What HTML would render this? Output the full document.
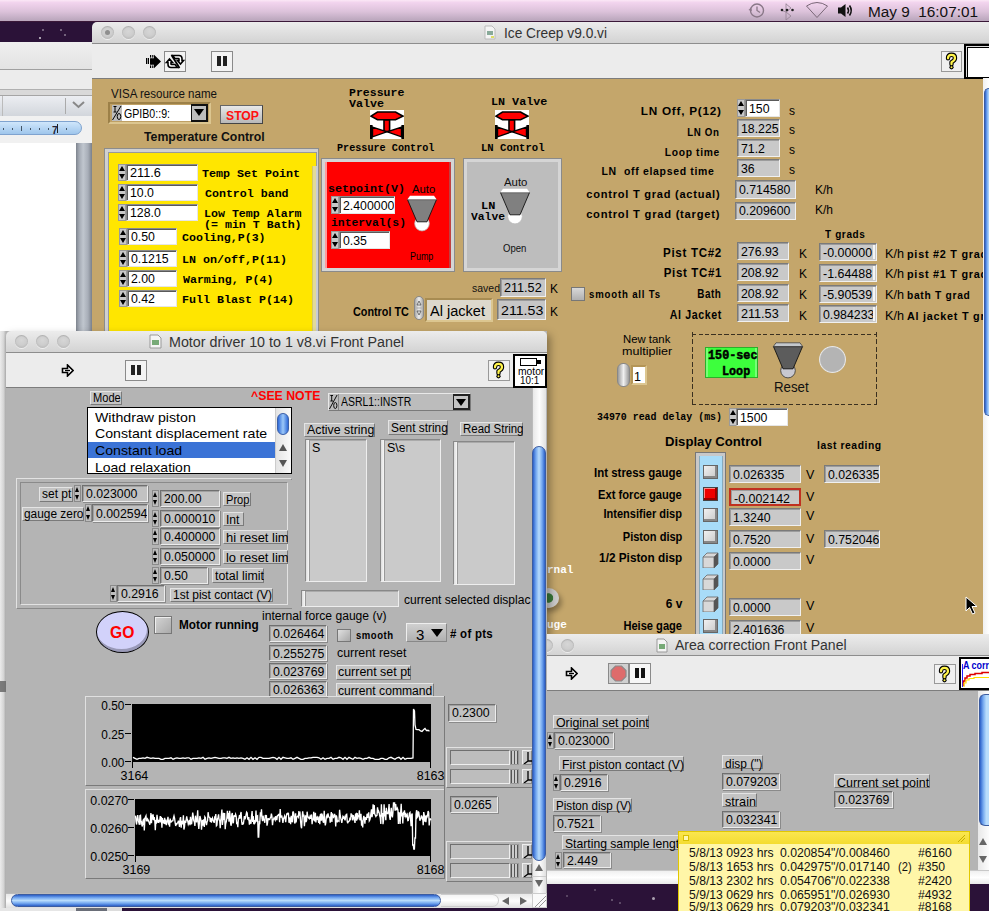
<!DOCTYPE html><html><head><meta charset="utf-8"><style>
*{box-sizing:border-box}
html,body{margin:0;padding:0}
body{width:989px;height:911px;position:relative;overflow:hidden;background:#2b1238;font-family:"Liberation Sans",sans-serif;font-size:12px;color:#000}
.a{position:absolute}
.t{position:absolute;white-space:nowrap;line-height:1}
.tl{position:absolute;border-radius:50%;background:radial-gradient(circle at 50% 40%,#d6d6d6 0%,#cdcdcd 50%,#b4b4b4 85%,#9c9c9c 100%);box-shadow:inset 0 1px 1px rgba(0,0,0,.15),0 1px 0 rgba(255,255,255,.6)}
.tld{position:absolute;width:5px;height:5px;border-radius:50%;background:#8e8e8e}
.tb{position:absolute;background:linear-gradient(#ececec,#d3d3d3);border-bottom:1px solid #8d8d8d}
.tbar{position:absolute;background:#ececec;border-bottom:1px solid #7d7d7d}
</style></head><body>
<div class="a" style="left:0px;top:0px;width:989px;height:22px;background:linear-gradient(#fbe8f6 0,#f2d4ee 12%,#dcc2da 55%,#bca8be 95%);border-bottom:1px solid #3a1838"></div>
<div class="t" style="left:868px;top:5.0px;font-size:14px;color:#111;transform:scaleX(1.0955);transform-origin:left center;">May 9&nbsp;&nbsp;16:07:01</div>
<svg class="a" style="left:740px;top:0px" width="130" height="22" viewBox="0 0 130 22"><circle cx="17" cy="10.5" r="6.5" fill="none" stroke="#8a7888" stroke-width="1.4"/><path d="M17 6.5V10.5L20 12.5" stroke="#8a7888" stroke-width="1.3" fill="none"/><path d="M8.5 10L11 7.5L12 11Z" fill="#8a7888"/><path d="M46 4L51 8L46 12V3.5M46 12L51 16L46 20V12M42 10.5L46 12" stroke="#9a8898" stroke-width="0.9" fill="none"/><circle cx="42" cy="10" r="1.3" fill="#222"/><circle cx="47" cy="10" r="1.3" fill="#222"/><circle cx="52.5" cy="10" r="1.3" fill="#222"/><path d="M66.5 6Q77 -1 87.5 6L77 17.5Z" fill="none" stroke="#7a6878" stroke-width="1"/><path d="M98 7.5H101L105.5 4V17L101 13.5H98Z" fill="#111"/><path d="M107.5 7.5Q109.5 10.5 107.5 13.5M109.5 5.5Q113 10.5 109.5 15.5" stroke="#111" stroke-width="1.6" fill="none"/></svg>
<div class="a" style="left:0px;top:42px;width:92px;height:869px;background:#fff"></div>
<div class="a" style="left:0px;top:42px;width:92px;height:28px;background:linear-gradient(#efefef,#e3e3e3);border-bottom:1px solid #a0a0a0"></div>
<div class="a" style="left:0px;top:70px;width:92px;height:20px;background:#ececec;border-bottom:1px solid #b0b0b0"></div>
<div class="a" style="left:0px;top:90px;width:92px;height:6px;background:#d9d9d9;border-bottom:1px solid #a5a5a5"></div>
<div class="a" style="left:0px;top:96px;width:92px;height:20px;background:linear-gradient(#eceef2,#d2d6dc)"></div>
<div class="a" style="left:65px;top:98px;width:1px;height:16px;background:#aaa"></div>
<div class="a" style="left:2px;top:96px;width:1px;height:20px;background:#bbb"></div>
<svg class="a" style="left:72px;top:101px" width="13" height="8" viewBox="0 0 13 8"><path d="M1 1L6.5 6L12 1" stroke="#888" stroke-width="2" fill="none"/></svg>
<div class="a" style="left:0px;top:116px;width:92px;height:27px;background:#f1f1f1"></div>
<div class="a" style="left:-12px;top:121px;width:94px;height:14px;border-radius:7px;background:linear-gradient(#cfe6fb,#9fc6ec);border:1px solid #7fa3cf"></div>
<div class="a" style="left:3px;top:128px;width:1px;height:2px;background:#456"></div>
<div class="a" style="left:12px;top:128px;width:1px;height:2px;background:#456"></div>
<div class="a" style="left:30px;top:128px;width:1px;height:2px;background:#456"></div>
<div class="a" style="left:39px;top:128px;width:1px;height:2px;background:#456"></div>
<div class="a" style="left:48px;top:128px;width:1px;height:2px;background:#456"></div>
<div class="a" style="left:66px;top:128px;width:1px;height:2px;background:#456"></div>
<div class="a" style="left:21px;top:126px;width:1px;height:5px;background:#456"></div>
<div class="a" style="left:57px;top:124px;width:1px;height:9px;background:#222"></div>
<div class="t" style="left:51.5px;top:124.6px;font-size:11px;color:#223;font-weight:bold;transform:scaleX(0.8980);transform-origin:left center;">7</div>
<div class="a" style="left:76px;top:143px;width:16px;height:190px;background:linear-gradient(90deg,#7e848e 0,#a4aab4 20%,#c0c6ce 45%,#a8aeb8 75%,#7a808a 100%)"></div>
<div class="a" style="left:0px;top:331px;width:6px;height:580px;background:linear-gradient(90deg,#ececec,#dcdcdc 60%,#b8b8b8)"></div>
<div class="a" style="left:0px;top:681px;width:6px;height:11px;background:#7c7c7c"></div>
<div class="a" style="left:92px;top:44px;width:897px;height:867px;background:#c4a66b"></div>
<div class="tb" style="left:92px;top:22px;width:897px;height:22px;border-radius:5px 0 0 0"></div>
<div class="tl" style="left:100.5px;top:26.200000000000003px;width:13px;height:13px;"></div>
<div class="tl" style="left:121.5px;top:26.200000000000003px;width:13px;height:13px;"></div>
<div class="tl" style="left:142.5px;top:26.200000000000003px;width:13px;height:13px;"></div>
<div class="tld" style="left:104.5px;top:30.2px;width:5px;height:5px;"></div>
<div class="t" style="left:504px;top:26.2px;font-size:14px;color:#333;transform:scaleX(0.9804);transform-origin:left center;">Ice Creep v9.0.vi</div>
<svg class="a" style="left:484px;top:25px" width="12" height="15" viewBox="0 0 12 15"><path d="M1 1H8L11 4V14H1Z" fill="#f4f4f4" stroke="#bbb"/><rect x="3" y="6" width="6" height="4" fill="#8a9"/><rect x="7" y="11" width="3" height="2" fill="#dd6"/></svg>
<div class="tbar" style="left:92px;top:44px;width:897px;height:35px;"></div>
<div class="a" style="left:964px;top:44px;width:25px;height:35px;background:#fff;border:2px solid #000;border-right:none;box-shadow:inset 1px 1px 0 #ddd,inset 2px 2px 0 #000"></div>
<!--ICECREEP-->
<svg class="a" style="left:145px;top:54px" width="17" height="15" viewBox="0 0 17 15"><rect x="1" y="4" width="1.2" height="6"/><rect x="2.8" y="4" width="1.2" height="6"/><rect x="5" y="1" width="1.2" height="2.6"/><rect x="7.2" y="1" width="1.2" height="2.6"/><rect x="5" y="11.4" width="1.2" height="2.6"/><rect x="7.2" y="11.4" width="1.2" height="2.6"/><path d="M5 4.2H9V0.8L16 7.5L9 14.2V10.8H5Z"/></svg>
<div class="a" style="left:164px;top:51px;width:22px;height:21px;background:#f3f3f3;border:1px solid #8a8a8a"></div>
<svg class="a" style="left:164px;top:51px" width="22" height="21" viewBox="0 0 22 21"><path d="M8.5 4.5H15Q18 4.5 18 7.5V9.5H19.5L16.5 13L13.5 9.5H15V8Q15 7.5 14.5 7.5H11Z" fill="#fff" stroke="#000" stroke-width="1.6"/><path d="M13.5 16.5H7Q4 16.5 4 13.5V11.5H2.5L5.5 8L8.5 11.5H7V13Q7 13.5 7.5 13.5H11Z" fill="#fff" stroke="#000" stroke-width="1.6"/><path d="M7.5 4L15.5 17" stroke="#000" stroke-width="1.8"/></svg>
<div class="a" style="left:211px;top:51px;width:22px;height:21px;background:#f3f3f3;border:1px solid #8a8a8a"></div>
<div class="a" style="left:217px;top:56px;width:4px;height:10px;background:#222"></div>
<div class="a" style="left:223px;top:56px;width:4px;height:10px;background:#222"></div>
<div class="a" style="left:941px;top:51px;width:21px;height:21px;background:#f0f0f0;border:1px solid #999"></div>
<svg class="a" style="left:941px;top:51px" width="21" height="20" viewBox="0 0 21 20"><path d="M7 7.3Q7 3.8 10.5 3.8Q14 3.8 14 7Q14 9.4 10.5 11.2V13.2" fill="none" stroke="#000" stroke-width="4.4" stroke-linecap="round" stroke-linejoin="round"/><circle cx="10.5" cy="16.3" r="2.1" fill="#000"/><path d="M7 7.3Q7 3.8 10.5 3.8Q14 3.8 14 7Q14 9.4 10.5 11.2V13.2" fill="none" stroke="#fff44a" stroke-width="2.2" stroke-linecap="round" stroke-linejoin="round"/><circle cx="10.5" cy="16.3" r="1" fill="#fff44a"/></svg>
<div class="t" style="left:111.4px;top:87.7px;font-size:12px;color:#111;transform:scaleX(0.9631);transform-origin:left center;">VISA resource name</div>
<div class="a" style="left:108px;top:102px;width:103px;height:22px;background:#bfa064;border:2px solid #9c8048;border-right-color:#dcc690;border-bottom-color:#dcc690"></div>
<svg class="a" style="left:112px;top:105px" width="10" height="16" viewBox="0 0 10 16" preserveAspectRatio="none"><rect width="10" height="16" fill="#bdbdbd"/><path d="M1.5 1.5H4.5M3 1.5V7M1.5 7H4.5" stroke="#000" stroke-width="1"/><path d="M0.5 15L9 1" stroke="#000" stroke-width="1"/><ellipse cx="7" cy="11.5" rx="1.8" ry="3" fill="none" stroke="#000" stroke-width="1"/></svg>
<div class="a" style="left:122px;top:105px;width:69px;height:16px;background:#fff"></div>
<div class="t" style="left:124.2px;top:106.9px;font-size:13px;;transform:scaleX(0.8160);transform-origin:left center;">GPIB0::9:</div>
<div class="a" style="left:191px;top:104px;width:17px;height:18px;background:#bdbdbd;border:2px solid #111;border-left-width:1px"></div>
<div class="a" style="left:194px;top:109px;width:0;height:0;border-left:5px solid transparent;border-right:5px solid transparent;border-top:7px solid #000"></div>
<div class="a" style="left:220px;top:105px;width:43px;height:19px;background:linear-gradient(#e8e8e8,#b8b8b8);border:1px solid #666;border-right-color:#444;border-bottom-color:#444"></div>
<div class="t" style="left:225.6px;top:108.9px;font-size:13px;font-weight:bold;color:#ff1010;transform:scaleX(0.9382);transform-origin:left center;">STOP</div>
<div class="t" style="left:144px;top:130.8px;font-size:12.5px;font-weight:bold;color:#111;transform:scaleX(0.9837);transform-origin:left center;">Temperature Control</div>
<div class="a" style="left:104px;top:148px;width:215px;height:190px;background:#d0d0d0;border:1px solid #8c8c8c"></div>
<div class="a" style="left:108px;top:152px;width:209px;height:186px;background:#ffe600;border:1px solid #999"></div>
<div class="a" style="left:312px;top:166px;width:6px;height:165px;background:#e2da98;border-left:1px solid #d0c870;border-right:2px solid #c8ccd8"></div>
<div class="a" style="left:118px;top:164px;width:8px;height:17px;background:#c8c8c8;border:1px solid #9a9a9a"><div class="a" style="left:0;top:1px;width:0;height:0;border-left:3px solid transparent;border-right:3px solid transparent;border-bottom:5px solid #000"></div><div class="a" style="left:0;bottom:1px;width:0;height:0;border-left:3px solid transparent;border-right:3px solid transparent;border-top:5px solid #000"></div></div>
<div class="a" style="left:126px;top:164px;width:72px;height:17px;background:#fff;border:1px solid #8a8a8a;border-right-color:#e6e6e6;border-bottom-color:#e6e6e6;box-shadow:inset 1px 1px 0 #5a5a5a;overflow:hidden;"><div class="t" style="left:2.5px;top:1.8px;font-size:12px;transform:scaleX(1.0569);transform-origin:left center;">211.6</div></div>
<div class="t" style="left:202.3px;top:167.7px;font-size:11.5px;font-family:'Liberation Mono',monospace;font-weight:bold;color:#000;transform:scaleX(1.0142);transform-origin:left center;">Temp Set Point</div>
<div class="a" style="left:118px;top:184px;width:8px;height:17px;background:#c8c8c8;border:1px solid #9a9a9a"><div class="a" style="left:0;top:1px;width:0;height:0;border-left:3px solid transparent;border-right:3px solid transparent;border-bottom:5px solid #000"></div><div class="a" style="left:0;bottom:1px;width:0;height:0;border-left:3px solid transparent;border-right:3px solid transparent;border-top:5px solid #000"></div></div>
<div class="a" style="left:126px;top:184px;width:72px;height:17px;background:#fff;border:1px solid #8a8a8a;border-right-color:#e6e6e6;border-bottom-color:#e6e6e6;box-shadow:inset 1px 1px 0 #5a5a5a;overflow:hidden;"><div class="t" style="left:2.5px;top:1.8px;font-size:12px;transform:scaleX(1.0253);transform-origin:left center;">10.0</div></div>
<div class="t" style="left:204.7px;top:187.7px;font-size:11.5px;font-family:'Liberation Mono',monospace;font-weight:bold;color:#000;transform:scaleX(1.0093);transform-origin:left center;">Control band</div>
<div class="a" style="left:118px;top:204px;width:8px;height:17px;background:#c8c8c8;border:1px solid #9a9a9a"><div class="a" style="left:0;top:1px;width:0;height:0;border-left:3px solid transparent;border-right:3px solid transparent;border-bottom:5px solid #000"></div><div class="a" style="left:0;bottom:1px;width:0;height:0;border-left:3px solid transparent;border-right:3px solid transparent;border-top:5px solid #000"></div></div>
<div class="a" style="left:126px;top:204px;width:72px;height:17px;background:#fff;border:1px solid #8a8a8a;border-right-color:#e6e6e6;border-bottom-color:#e6e6e6;box-shadow:inset 1px 1px 0 #5a5a5a;overflow:hidden;"><div class="t" style="left:2.5px;top:1.8px;font-size:12px;transform:scaleX(1.0256);transform-origin:left center;">128.0</div></div>
<div class="t" style="left:203.6px;top:207.7px;font-size:11.5px;font-family:'Liberation Mono',monospace;font-weight:bold;color:#000;transform:scaleX(1.0101);transform-origin:left center;">Low Temp Alarm</div>
<div class="a" style="left:119px;top:228px;width:8px;height:17px;background:#c8c8c8;border:1px solid #9a9a9a"><div class="a" style="left:0;top:1px;width:0;height:0;border-left:3px solid transparent;border-right:3px solid transparent;border-bottom:5px solid #000"></div><div class="a" style="left:0;bottom:1px;width:0;height:0;border-left:3px solid transparent;border-right:3px solid transparent;border-top:5px solid #000"></div></div>
<div class="a" style="left:127px;top:228px;width:50px;height:17px;background:#fff;border:1px solid #8a8a8a;border-right-color:#e6e6e6;border-bottom-color:#e6e6e6;box-shadow:inset 1px 1px 0 #5a5a5a;overflow:hidden;"><div class="t" style="left:2.5px;top:1.8px;font-size:12px;transform:scaleX(1.0253);transform-origin:left center;">0.50</div></div>
<div class="t" style="left:181.9px;top:231.7px;font-size:11.5px;font-family:'Liberation Mono',monospace;font-weight:bold;color:#000;transform:scaleX(1.0093);transform-origin:left center;">Cooling,P(3)</div>
<div class="a" style="left:119px;top:250px;width:8px;height:17px;background:#c8c8c8;border:1px solid #9a9a9a"><div class="a" style="left:0;top:1px;width:0;height:0;border-left:3px solid transparent;border-right:3px solid transparent;border-bottom:5px solid #000"></div><div class="a" style="left:0;bottom:1px;width:0;height:0;border-left:3px solid transparent;border-right:3px solid transparent;border-top:5px solid #000"></div></div>
<div class="a" style="left:127px;top:250px;width:50px;height:17px;background:#fff;border:1px solid #8a8a8a;border-right-color:#e6e6e6;border-bottom-color:#e6e6e6;box-shadow:inset 1px 1px 0 #5a5a5a;overflow:hidden;"><div class="t" style="left:2.5px;top:1.8px;font-size:12px;transform:scaleX(1.0258);transform-origin:left center;">0.1215</div></div>
<div class="t" style="left:181.9px;top:253.7px;font-size:11.5px;font-family:'Liberation Mono',monospace;font-weight:bold;color:#000;transform:scaleX(1.0142);transform-origin:left center;">LN on/off,P(11)</div>
<div class="a" style="left:119px;top:270px;width:8px;height:17px;background:#c8c8c8;border:1px solid #9a9a9a"><div class="a" style="left:0;top:1px;width:0;height:0;border-left:3px solid transparent;border-right:3px solid transparent;border-bottom:5px solid #000"></div><div class="a" style="left:0;bottom:1px;width:0;height:0;border-left:3px solid transparent;border-right:3px solid transparent;border-top:5px solid #000"></div></div>
<div class="a" style="left:127px;top:270px;width:50px;height:17px;background:#fff;border:1px solid #8a8a8a;border-right-color:#e6e6e6;border-bottom-color:#e6e6e6;box-shadow:inset 1px 1px 0 #5a5a5a;overflow:hidden;"><div class="t" style="left:2.5px;top:1.8px;font-size:12px;transform:scaleX(1.0253);transform-origin:left center;">2.00</div></div>
<div class="t" style="left:182.8px;top:273.7px;font-size:11.5px;font-family:'Liberation Mono',monospace;font-weight:bold;color:#000;transform:scaleX(1.0076);transform-origin:left center;">Warming, P(4)</div>
<div class="a" style="left:119px;top:290px;width:8px;height:17px;background:#c8c8c8;border:1px solid #9a9a9a"><div class="a" style="left:0;top:1px;width:0;height:0;border-left:3px solid transparent;border-right:3px solid transparent;border-bottom:5px solid #000"></div><div class="a" style="left:0;bottom:1px;width:0;height:0;border-left:3px solid transparent;border-right:3px solid transparent;border-top:5px solid #000"></div></div>
<div class="a" style="left:127px;top:290px;width:50px;height:17px;background:#fff;border:1px solid #8a8a8a;border-right-color:#e6e6e6;border-bottom-color:#e6e6e6;box-shadow:inset 1px 1px 0 #5a5a5a;overflow:hidden;"><div class="t" style="left:2.5px;top:1.8px;font-size:12px;transform:scaleX(1.0253);transform-origin:left center;">0.42</div></div>
<div class="t" style="left:181.9px;top:293.7px;font-size:11.5px;font-family:'Liberation Mono',monospace;font-weight:bold;color:#000;transform:scaleX(1.0143);transform-origin:left center;">Full Blast P(14)</div>
<div class="t" style="left:204.2px;top:219.2px;font-size:11.5px;font-family:'Liberation Mono',monospace;font-weight:bold;;transform:scaleX(1.0101);transform-origin:left center;">(= min T Bath)</div>
<div class="t" style="left:349.4px;top:87.6px;font-size:11px;font-family:'Liberation Mono',monospace;font-weight:bold;;transform:scaleX(1.0490);transform-origin:left center;">Pressure</div>
<div class="t" style="left:349.4px;top:98.6px;font-size:11px;font-family:'Liberation Mono',monospace;font-weight:bold;;transform:scaleX(1.0601);transform-origin:left center;">Valve</div>
<svg class="a" style="left:370px;top:110px" width="34" height="29" viewBox="0 0 34 29"><rect width="34" height="29" fill="#fff"/><path d="M1 6.2L7.5 2H25.5L33 6.2L25.5 9.8H7.5Z" fill="#f00" stroke="#000" stroke-width="1.6" stroke-linejoin="miter"/><rect x="14" y="10" width="5.6" height="11.5" fill="#f00" stroke="#000" stroke-width="1.6"/><rect x="0" y="15" width="2.6" height="14" fill="#000"/><rect x="31.4" y="15" width="2.6" height="14" fill="#000"/><path d="M2.5 17.2L16.8 21.8L2.5 26.8Z M31.5 17.2L17.2 21.8L31.5 26.8Z" fill="#f00" stroke="#000" stroke-width="1.4" stroke-linejoin="miter"/></svg>
<div class="t" style="left:336.6px;top:143.3px;font-size:11.3px;font-family:'Liberation Mono',monospace;font-weight:bold;;transform:scaleX(0.8980);transform-origin:left center;">Pressure Control</div>
<svg class="a" style="left:495px;top:110px" width="34" height="29" viewBox="0 0 34 29"><rect width="34" height="29" fill="#fff"/><path d="M1 6.2L7.5 2H25.5L33 6.2L25.5 9.8H7.5Z" fill="#f00" stroke="#000" stroke-width="1.6" stroke-linejoin="miter"/><rect x="14" y="10" width="5.6" height="11.5" fill="#f00" stroke="#000" stroke-width="1.6"/><rect x="0" y="15" width="2.6" height="14" fill="#000"/><rect x="31.4" y="15" width="2.6" height="14" fill="#000"/><path d="M2.5 17.2L16.8 21.8L2.5 26.8Z M31.5 17.2L17.2 21.8L31.5 26.8Z" fill="#f00" stroke="#000" stroke-width="1.4" stroke-linejoin="miter"/></svg>
<div class="t" style="left:491.4px;top:96.6px;font-size:11px;font-family:'Liberation Mono',monospace;font-weight:bold;;transform:scaleX(1.0660);transform-origin:left center;">LN Valve</div>
<div class="t" style="left:480.5px;top:143.3px;font-size:11.3px;font-family:'Liberation Mono',monospace;font-weight:bold;;transform:scaleX(0.9366);transform-origin:left center;">LN Control</div>
<div class="a" style="left:321px;top:158px;width:134px;height:114px;background:#d5d5d5;border:1px solid #8a8a8a"></div>
<div class="a" style="left:325px;top:162px;width:126px;height:106px;background:#ff0000;border-right:2px solid #c04040;border-left:2px solid #ff9999"></div>
<div class="t" style="left:327.8px;top:183.6px;font-size:11px;font-family:'Liberation Mono',monospace;font-weight:bold;color:#000;transform:scaleX(1.0589);transform-origin:left center;">setpoint(V)</div>
<div class="t" style="left:411.7px;top:183.6px;font-size:11px;color:#000;transform:scaleX(1.0291);transform-origin:left center;">Auto</div>
<div class="a" style="left:331px;top:196px;width:8px;height:18px;background:#c8c8c8;border:1px solid #9a9a9a"><div class="a" style="left:0;top:1px;width:0;height:0;border-left:3px solid transparent;border-right:3px solid transparent;border-bottom:5px solid #000"></div><div class="a" style="left:0;bottom:1px;width:0;height:0;border-left:3px solid transparent;border-right:3px solid transparent;border-top:5px solid #000"></div></div>
<div class="a" style="left:339px;top:196px;width:56px;height:18px;background:#fff;border:1px solid #8a8a8a;border-right-color:#e6e6e6;border-bottom-color:#e6e6e6;box-shadow:inset 1px 1px 0 #5a5a5a;overflow:hidden;"><div class="t" style="left:2.5px;top:2.8px;font-size:12px;transform:scaleX(1.0257);transform-origin:left center;">2.400000</div></div>
<div class="t" style="left:330.6px;top:217.6px;font-size:11px;font-family:'Liberation Mono',monospace;font-weight:bold;color:#000;transform:scaleX(1.0327);transform-origin:left center;">interval(s)</div>
<div class="a" style="left:331px;top:231px;width:8px;height:18px;background:#c8c8c8;border:1px solid #9a9a9a"><div class="a" style="left:0;top:1px;width:0;height:0;border-left:3px solid transparent;border-right:3px solid transparent;border-bottom:5px solid #000"></div><div class="a" style="left:0;bottom:1px;width:0;height:0;border-left:3px solid transparent;border-right:3px solid transparent;border-top:5px solid #000"></div></div>
<div class="a" style="left:339px;top:231px;width:51px;height:18px;background:#fff;border:1px solid #8a8a8a;border-right-color:#e6e6e6;border-bottom-color:#e6e6e6;box-shadow:inset 1px 1px 0 #5a5a5a;overflow:hidden;"><div class="t" style="left:2.5px;top:2.8px;font-size:12px;transform:scaleX(1.0253);transform-origin:left center;">0.35</div></div>
<div class="t" style="left:409.9px;top:250.6px;font-size:11px;color:#000;transform:scaleX(0.8104);transform-origin:left center;">Pump</div>
<svg class="a" style="left:406px;top:195px" width="32" height="37" viewBox="0 0 32 37"><circle cx="16" cy="28.6" r="7.3" fill="#fff" stroke="#bbb" stroke-width="0.8"/><path d="M1.5 4.6H30.5L21 26.8H11Z" fill="#808080" stroke="#111" stroke-width="0.9" stroke-linejoin="miter"/><path d="M1.3 4.6L4 0.8H28L30.7 4.6Z" fill="#fff" stroke="none" stroke-width="0.7"/></svg>
<div class="a" style="left:463px;top:158px;width:99px;height:114px;background:#d5d5d5;border:1px solid #8a8a8a"></div>
<div class="a" style="left:467px;top:162px;width:91px;height:106px;background:#bdbdbd"></div>
<div class="t" style="left:503.7px;top:176.6px;font-size:11px;color:#111;transform:scaleX(1.0335);transform-origin:left center;">Auto</div>
<svg class="a" style="left:498.5px;top:188px" width="32" height="37" viewBox="0 0 32 37"><circle cx="16" cy="28.6" r="7.3" fill="#fff" stroke="#bbb" stroke-width="0.8"/><path d="M1.5 4.6H30.5L21 26.8H11Z" fill="#808080" stroke="#111" stroke-width="0.9" stroke-linejoin="miter"/><path d="M1.3 4.6L4 0.8H28L30.7 4.6Z" fill="#fff" stroke="none" stroke-width="0.7"/></svg>
<div class="t" style="left:480.5px;top:200.6px;font-size:11px;font-family:'Liberation Mono',monospace;font-weight:bold;;transform:scaleX(1.0831);transform-origin:left center;">LN</div>
<div class="t" style="left:470.8px;top:211.6px;font-size:11px;font-family:'Liberation Mono',monospace;font-weight:bold;;transform:scaleX(1.0298);transform-origin:left center;">Valve</div>
<div class="t" style="left:502.9px;top:242.6px;font-size:11px;color:#111;transform:scaleX(0.8692);transform-origin:left center;">Open</div>
<div class="t" style="left:472.3px;top:283.2px;font-size:11.5px;color:#111;transform:scaleX(0.9124);transform-origin:left center;">saved</div>
<div class="a" style="left:500px;top:278px;width:46px;height:19px;background:#c6c6c6;border:1px solid #7a7a7a;border-right-color:#f0f0f0;border-bottom-color:#f0f0f0;box-shadow:inset 1px 1px 0 #9c9c9c;overflow:hidden;"><div class="t" style="left:2.5px;top:3.3px;font-size:12px;transform:scaleX(1.0513);transform-origin:left center;">211.52</div></div>
<div class="t" style="left:550px;top:282.7px;font-size:12px;;">K</div>
<div class="t" style="left:352.8px;top:305.7px;font-size:12px;font-weight:bold;;transform:scaleX(0.9000);transform-origin:left center;">Control TC</div>
<div class="a" style="left:414px;top:296px;width:10px;height:24px;border-radius:5px;background:linear-gradient(90deg,#aaa,#eee,#aaa);border:1px solid #888"></div>
<svg class="a" style="left:415px;top:299px" width="8" height="18" viewBox="0 0 8 18"><path d="M4 2L6 6H2Z M4 16L6 12H2Z" fill="none" stroke="#555" stroke-width="0.8"/><path d="M1.5 9H6.5" stroke="#888" stroke-width="0.6"/></svg>
<div class="a" style="left:425px;top:298px;width:68px;height:24px;background:#ddd8cc;border:2px solid #a88c52;border-right-color:#dcc690;border-bottom-color:#dcc690"></div>
<div class="t" style="left:430px;top:304.0px;font-size:14px;;transform:scaleX(1.0393);transform-origin:left center;">Al jacket</div>
<div class="a" style="left:497px;top:299px;width:49px;height:21px;background:#c6c6c6;border:1px solid #7a7a7a;border-right-color:#f0f0f0;border-bottom-color:#f0f0f0;box-shadow:inset 1px 1px 0 #9c9c9c;overflow:hidden;"><div class="t" style="left:2.5px;top:4.1px;font-size:13.5px;transform:scaleX(1.0511);transform-origin:left center;">211.53</div></div>
<div class="t" style="left:550px;top:305.7px;font-size:12px;;">K</div>
<div class="t" style="right:267.70000000000005px;top:105.6px;font-size:11px;font-weight:bold;letter-spacing:0.7px;;transform:scaleX(1.0697);transform-origin:right center;">LN Off, P(12)</div>
<div class="a" style="left:737px;top:99px;width:8px;height:18px;background:#c8c8c8;border:1px solid #9a9a9a"><div class="a" style="left:0;top:1px;width:0;height:0;border-left:3px solid transparent;border-right:3px solid transparent;border-bottom:5px solid #000"></div><div class="a" style="left:0;bottom:1px;width:0;height:0;border-left:3px solid transparent;border-right:3px solid transparent;border-top:5px solid #000"></div></div>
<div class="a" style="left:745px;top:99px;width:35px;height:18px;background:#fff;border:1px solid #8a8a8a;border-right-color:#e6e6e6;border-bottom-color:#e6e6e6;box-shadow:inset 1px 1px 0 #5a5a5a;overflow:hidden;"><div class="t" style="left:2.5px;top:2.8px;font-size:12px;transform:scaleX(1.0259);transform-origin:left center;">150</div></div>
<div class="t" style="left:789px;top:104.7px;font-size:12px;;">s</div>
<div class="t" style="right:269.4px;top:126.6px;font-size:11px;font-weight:bold;letter-spacing:0.7px;;transform:scaleX(0.8849);transform-origin:right center;">LN On</div>
<div class="a" style="left:737px;top:119px;width:43px;height:18px;background:#c9c9c9;border:1px solid #7a7a7a;border-right-color:#f0f0f0;border-bottom-color:#f0f0f0;box-shadow:inset 1px 1px 0 #9c9c9c;overflow:hidden;"><div class="t" style="left:2.5px;top:2.8px;font-size:12px;transform:scaleX(1.0258);transform-origin:left center;">18.225</div></div>
<div class="t" style="left:789px;top:123.7px;font-size:12px;;">s</div>
<div class="t" style="right:269.4px;top:147.3px;font-size:11px;font-weight:bold;letter-spacing:0.7px;;transform:scaleX(0.9344);transform-origin:right center;">Loop time</div>
<div class="a" style="left:737px;top:139px;width:43px;height:18px;background:#c9c9c9;border:1px solid #7a7a7a;border-right-color:#f0f0f0;border-bottom-color:#f0f0f0;box-shadow:inset 1px 1px 0 #9c9c9c;overflow:hidden;"><div class="t" style="left:2.5px;top:2.8px;font-size:12px;transform:scaleX(1.0253);transform-origin:left center;">71.2</div></div>
<div class="t" style="left:789px;top:143.7px;font-size:12px;;">s</div>
<div class="t" style="right:274.29999999999995px;top:165.6px;font-size:11px;font-weight:bold;letter-spacing:0.7px;;transform:scaleX(0.9533);transform-origin:right center;">LN&nbsp; off elapsed time</div>
<div class="a" style="left:737px;top:159px;width:43px;height:18px;background:#c9c9c9;border:1px solid #7a7a7a;border-right-color:#f0f0f0;border-bottom-color:#f0f0f0;box-shadow:inset 1px 1px 0 #9c9c9c;overflow:hidden;"><div class="t" style="left:2.5px;top:2.8px;font-size:12px;transform:scaleX(1.0255);transform-origin:left center;">36</div></div>
<div class="t" style="left:789px;top:163.7px;font-size:12px;;">s</div>
<div class="t" style="right:268.4px;top:188.6px;font-size:11px;font-weight:bold;letter-spacing:0.75px;;transform:scaleX(1.0047);transform-origin:right center;">control T grad (actual)</div>
<div class="a" style="left:735px;top:180px;width:61px;height:19px;background:#c9c9c9;border:1px solid #7a7a7a;border-right-color:#f0f0f0;border-bottom-color:#f0f0f0;box-shadow:inset 1px 1px 0 #9c9c9c;overflow:hidden;"><div class="t" style="left:2.5px;top:2.8px;font-size:12px;transform:scaleX(1.0257);transform-origin:left center;">0.714580</div></div>
<div class="t" style="left:815px;top:183.7px;font-size:12px;;">K/h</div>
<div class="t" style="right:268.4px;top:208.6px;font-size:11px;font-weight:bold;letter-spacing:0.75px;;transform:scaleX(1.0141);transform-origin:right center;">control T grad (target)</div>
<div class="a" style="left:735px;top:202px;width:61px;height:18px;background:#c9c9c9;border:1px solid #7a7a7a;border-right-color:#f0f0f0;border-bottom-color:#f0f0f0;box-shadow:inset 1px 1px 0 #9c9c9c;overflow:hidden;"><div class="t" style="left:2.5px;top:1.8px;font-size:12px;transform:scaleX(1.0257);transform-origin:left center;">0.209600</div></div>
<div class="t" style="left:815px;top:203.7px;font-size:12px;;">K/h</div>
<div class="t" style="left:824.5px;top:229.2px;font-size:11px;font-weight:bold;letter-spacing:0.7px;transform:scaleX(0.9072);transform-origin:left center;">T grads</div>
<div class="t" style="right:267.29999999999995px;top:246.7px;font-size:12px;font-weight:bold;letter-spacing:0.7px;;transform:scaleX(0.9672);transform-origin:right center;">Pist TC#2</div>
<div class="a" style="left:737px;top:242px;width:52px;height:18px;background:#c9c9c9;border:1px solid #7a7a7a;border-right-color:#f0f0f0;border-bottom-color:#f0f0f0;box-shadow:inset 1px 1px 0 #9c9c9c;overflow:hidden;"><div class="t" style="left:2.5px;top:2.8px;font-size:12px;transform:scaleX(1.0258);transform-origin:left center;">276.93</div></div>
<div class="t" style="left:799px;top:247.7px;font-size:12px;;">K</div>
<div class="a" style="left:819px;top:243px;width:58px;height:18px;background:#c9c9c9;border:1px solid #7a7a7a;border-right-color:#f0f0f0;border-bottom-color:#f0f0f0;box-shadow:inset 1px 1px 0 #9c9c9c;overflow:hidden;"><div class="t" style="left:2.5px;top:2.8px;font-size:12px;transform:scaleX(1.0364);transform-origin:left center;">-0.00000</div></div>
<div class="a" style="left:873px;top:245px;width:2px;height:14px;background:#f4f4f4"></div>
<div class="t" style="left:885px;top:248.3px;font-size:12.5px;;transform:scaleX(1.0125);transform-origin:left center;">K/h</div>
<div class="t" style="left:907.4px;top:249.2px;font-size:11.5px;font-weight:bold;letter-spacing:0.8px;transform:scaleX(0.9413);transform-origin:left center;">pist #2 T grad</div>
<div class="t" style="right:267.29999999999995px;top:266.7px;font-size:12px;font-weight:bold;letter-spacing:0.7px;;transform:scaleX(0.9557);transform-origin:right center;">Pist TC#1</div>
<div class="a" style="left:737px;top:263px;width:52px;height:18px;background:#c9c9c9;border:1px solid #7a7a7a;border-right-color:#f0f0f0;border-bottom-color:#f0f0f0;box-shadow:inset 1px 1px 0 #9c9c9c;overflow:hidden;"><div class="t" style="left:2.5px;top:2.8px;font-size:12px;transform:scaleX(1.0258);transform-origin:left center;">208.92</div></div>
<div class="t" style="left:799px;top:267.7px;font-size:12px;;">K</div>
<div class="a" style="left:819px;top:264px;width:58px;height:18px;background:#c9c9c9;border:1px solid #7a7a7a;border-right-color:#f0f0f0;border-bottom-color:#f0f0f0;box-shadow:inset 1px 1px 0 #9c9c9c;overflow:hidden;"><div class="t" style="left:2.5px;top:2.8px;font-size:12px;transform:scaleX(1.0364);transform-origin:left center;">-1.64488</div></div>
<div class="a" style="left:873px;top:266px;width:2px;height:14px;background:#f4f4f4"></div>
<div class="t" style="left:885px;top:268.3px;font-size:12.5px;;transform:scaleX(1.0125);transform-origin:left center;">K/h</div>
<div class="t" style="left:907.4px;top:269.2px;font-size:11.5px;font-weight:bold;letter-spacing:0.8px;transform:scaleX(0.9413);transform-origin:left center;">pist #1 T grad</div>
<div class="t" style="right:267.29999999999995px;top:287.7px;font-size:12px;font-weight:bold;letter-spacing:0.7px;;transform:scaleX(0.8246);transform-origin:right center;">Bath</div>
<div class="a" style="left:737px;top:284px;width:52px;height:18px;background:#c9c9c9;border:1px solid #7a7a7a;border-right-color:#f0f0f0;border-bottom-color:#f0f0f0;box-shadow:inset 1px 1px 0 #9c9c9c;overflow:hidden;"><div class="t" style="left:2.5px;top:2.8px;font-size:12px;transform:scaleX(1.0258);transform-origin:left center;">208.92</div></div>
<div class="t" style="left:799px;top:288.7px;font-size:12px;;">K</div>
<div class="a" style="left:819px;top:285px;width:58px;height:18px;background:#c9c9c9;border:1px solid #7a7a7a;border-right-color:#f0f0f0;border-bottom-color:#f0f0f0;box-shadow:inset 1px 1px 0 #9c9c9c;overflow:hidden;"><div class="t" style="left:2.5px;top:2.8px;font-size:12px;transform:scaleX(1.0364);transform-origin:left center;">-5.90539</div></div>
<div class="a" style="left:873px;top:287px;width:2px;height:14px;background:#f4f4f4"></div>
<div class="t" style="left:885px;top:289.3px;font-size:12.5px;;transform:scaleX(1.0125);transform-origin:left center;">K/h</div>
<div class="t" style="left:907.4px;top:290.2px;font-size:11.5px;font-weight:bold;letter-spacing:0.8px;transform:scaleX(0.8902);transform-origin:left center;">bath T grad</div>
<div class="t" style="right:267.29999999999995px;top:308.7px;font-size:12px;font-weight:bold;letter-spacing:0.7px;;transform:scaleX(0.8847);transform-origin:right center;">Al Jacket</div>
<div class="a" style="left:737px;top:304px;width:52px;height:18px;background:#c9c9c9;border:1px solid #7a7a7a;border-right-color:#f0f0f0;border-bottom-color:#f0f0f0;box-shadow:inset 1px 1px 0 #9c9c9c;overflow:hidden;"><div class="t" style="left:2.5px;top:2.8px;font-size:12px;transform:scaleX(1.0513);transform-origin:left center;">211.53</div></div>
<div class="t" style="left:799px;top:309.7px;font-size:12px;;">K</div>
<div class="a" style="left:819px;top:305px;width:58px;height:18px;background:#c9c9c9;border:1px solid #7a7a7a;border-right-color:#f0f0f0;border-bottom-color:#f0f0f0;box-shadow:inset 1px 1px 0 #9c9c9c;overflow:hidden;"><div class="t" style="left:2.5px;top:2.8px;font-size:12px;transform:scaleX(1.0257);transform-origin:left center;">0.984233</div></div>
<div class="a" style="left:873px;top:307px;width:2px;height:14px;background:#f4f4f4"></div>
<div class="t" style="left:885px;top:310.3px;font-size:12.5px;;transform:scaleX(1.0125);transform-origin:left center;">K/h</div>
<div class="t" style="left:907.4px;top:311.2px;font-size:11.5px;font-weight:bold;letter-spacing:0.8px;transform:scaleX(0.9393);transform-origin:left center;">Al jacket T grad</div>
<div class="a" style="left:571px;top:287px;width:14px;height:14px;background:linear-gradient(#d8d8d8,#b0b0b0);border:1px solid #777"></div>
<div class="t" style="left:589px;top:288.5px;font-size:10.5px;font-weight:bold;letter-spacing:0.9px;transform:scaleX(0.9159);transform-origin:left center;">smooth all Ts</div>
<div class="t" style="left:622.7px;top:334.0px;font-size:11.5px;;transform:scaleX(0.9867);transform-origin:left center;">New tank</div>
<div class="t" style="left:622px;top:346.0px;font-size:11.5px;;transform:scaleX(1.0909);transform-origin:left center;">multiplier</div>
<div class="a" style="left:617px;top:363px;width:13px;height:24px;border-radius:6px;background:linear-gradient(90deg,#9a9a9a,#f0f0f0 50%,#9a9a9a);border:1px solid #888"></div>
<div class="a" style="left:631px;top:365px;width:16px;height:20px;background:#fff;border:2px solid #b49556;border-right-color:#dcc690;border-bottom-color:#dcc690"></div>
<div class="t" style="left:634px;top:371.3px;font-size:12.5px;;">1</div>
<div class="a" style="left:692px;top:334px;width:185px;height:1px;background:repeating-linear-gradient(90deg,#3a3020 0 4px,transparent 4px 6.5px)"></div>
<div class="a" style="left:692px;top:404px;width:185px;height:1px;background:repeating-linear-gradient(90deg,#3a3020 0 4px,transparent 4px 6.5px)"></div>
<div class="a" style="left:692px;top:332px;width:1px;height:75px;background:repeating-linear-gradient(#3a3020 0 5px,transparent 5px 7.5px)"></div>
<div class="a" style="left:876px;top:332px;width:1px;height:75px;background:repeating-linear-gradient(#3a3020 0 5px,transparent 5px 7.5px)"></div>
<div class="a" style="left:705px;top:347px;width:53px;height:31px;background:#3dff3d;border:1px solid #2ab02a;box-shadow:inset 2px 0 0 #7f7,inset -2px 0 0 #7f7"></div>
<div class="t" style="left:707.8px;top:349.9px;font-size:12.5px;font-family:'Liberation Mono',monospace;font-weight:bold;-webkit-text-stroke:0.5px #000;transform:scaleX(0.9426);transform-origin:left center;">150-sec</div>
<div class="t" style="left:721.7px;top:365.9px;font-size:12.5px;font-family:'Liberation Mono',monospace;font-weight:bold;-webkit-text-stroke:0.5px #000;transform:scaleX(0.9395);transform-origin:left center;">Loop</div>
<svg class="a" style="left:771.5px;top:341.5px" width="32" height="37" viewBox="0 0 32 37"><circle cx="16" cy="28.6" r="7.3" fill="#c8c8d0" stroke="#333" stroke-width="0.8"/><path d="M1.5 4.6H30.5L21 26.8H11Z" fill="#5c5c5c" stroke="#111" stroke-width="0.9" stroke-linejoin="miter"/><path d="M1.3 4.6L4 0.8H28L30.7 4.6Z" fill="#c4c8cc" stroke="#333" stroke-width="0.7"/></svg>
<div class="t" style="left:773.5px;top:380.3px;font-size:14px;color:#111;transform:scaleX(0.9487);transform-origin:left center;">Reset</div>
<div class="a" style="left:819px;top:346px;width:27px;height:27px;border-radius:50%;background:radial-gradient(circle at 50% 50%,#b4b4b4 0%,#b4b4b4 62%,#e8e8e8 68%,#bbb 78%,#666 100%)"></div>
<div class="t" style="left:596.8px;top:411.5px;font-size:10.5px;font-family:'Liberation Mono',monospace;font-weight:bold;;transform:scaleX(0.9446);transform-origin:left center;">34970 read delay (ms)</div>
<div class="a" style="left:729px;top:408px;width:8px;height:18px;background:#c8c8c8;border:1px solid #9a9a9a"><div class="a" style="left:0;top:1px;width:0;height:0;border-left:3px solid transparent;border-right:3px solid transparent;border-bottom:5px solid #000"></div><div class="a" style="left:0;bottom:1px;width:0;height:0;border-left:3px solid transparent;border-right:3px solid transparent;border-top:5px solid #000"></div></div>
<div class="a" style="left:736px;top:408px;width:52px;height:18px;background:#fff;border:1px solid #8a8a8a;border-right-color:#e6e6e6;border-bottom-color:#e6e6e6;box-shadow:inset 1px 1px 0 #5a5a5a;overflow:hidden;"><div class="t" style="left:2.5px;top:2.8px;font-size:12px;transform:scaleX(1.0261);transform-origin:left center;">1500</div></div>
<div class="t" style="left:664.8px;top:434.6px;font-size:13px;font-weight:bold;;transform:scaleX(1.0096);transform-origin:left center;">Display Control</div>
<div class="t" style="left:816.9px;top:440.2px;font-size:11px;font-weight:bold;letter-spacing:0.6px;transform:scaleX(0.9383);transform-origin:left center;">last reading</div>
<div class="a" style="left:695px;top:452px;width:31px;height:190px;background:#c8c8c8;border:1px solid #777"></div>
<div class="a" style="left:699px;top:456px;width:24px;height:190px;background:#a8dcf8;border-left:1px solid #8ab;border-right:1px solid #8ab"></div>
<div class="a" style="left:703px;top:465px;width:15px;height:14px;background:linear-gradient(135deg,#f0f0f0,#c8c8c8);border:1px solid #666;box-shadow:inset -2px -2px 0 #888"></div>
<div class="t" style="right:307.1px;top:466.6px;font-size:12.5px;font-weight:bold;;transform:scaleX(0.9158);transform-origin:right center;">Int stress gauge</div>
<div class="a" style="left:729px;top:465px;width:72px;height:18px;background:#c9c9c9;border:1px solid #7a7a7a;border-right-color:#f0f0f0;border-bottom-color:#f0f0f0;box-shadow:inset 1px 1px 0 #9c9c9c;overflow:hidden;"><div class="t" style="left:2.5px;top:2.8px;font-size:12px;transform:scaleX(1.0257);transform-origin:left center;">0.026335</div></div>
<div class="t" style="left:806px;top:468.6px;font-size:12.5px;;">V</div>
<div class="a" style="left:824px;top:465px;width:56px;height:18px;background:#c9c9c9;border:1px solid #7a7a7a;border-right-color:#f0f0f0;border-bottom-color:#f0f0f0;box-shadow:inset 1px 1px 0 #9c9c9c;overflow:hidden;"><div class="t" style="left:2.5px;top:2.8px;font-size:12px;transform:scaleX(1.0257);transform-origin:left center;">0.026335</div></div>
<div class="a" style="left:703px;top:487px;width:15px;height:14px;background:#e00;border:1px solid #444;box-shadow:inset -2px -2px 0 #900,inset 1px 1px 0 #f88"></div>
<div class="t" style="right:307.1px;top:488.6px;font-size:12.5px;font-weight:bold;;transform:scaleX(0.8925);transform-origin:right center;">Ext force gauge</div>
<div class="a" style="left:729px;top:488px;width:72px;height:18px;background:#c9c9c9;border:1px solid #7a7a7a;border-right-color:#f0f0f0;border-bottom-color:#f0f0f0;box-shadow:inset 1px 1px 0 #9c9c9c;overflow:hidden;border:2px solid #c03020;"><div class="t" style="left:2.5px;top:2.8px;font-size:12px;transform:scaleX(1.0352);transform-origin:left center;">-0.002142</div></div>
<div class="t" style="left:806px;top:490.6px;font-size:12.5px;;">V</div>
<div class="a" style="left:703px;top:508px;width:15px;height:14px;background:linear-gradient(135deg,#f0f0f0,#c8c8c8);border:1px solid #666;box-shadow:inset -2px -2px 0 #888"></div>
<div class="t" style="right:307.1px;top:508.0px;font-size:12.5px;font-weight:bold;;transform:scaleX(0.8818);transform-origin:right center;">Intensifier disp</div>
<div class="a" style="left:729px;top:508px;width:72px;height:18px;background:#c9c9c9;border:1px solid #7a7a7a;border-right-color:#f0f0f0;border-bottom-color:#f0f0f0;box-shadow:inset 1px 1px 0 #9c9c9c;overflow:hidden;"><div class="t" style="left:2.5px;top:2.8px;font-size:12px;transform:scaleX(1.0258);transform-origin:left center;">1.3240</div></div>
<div class="t" style="left:806px;top:510.0px;font-size:12.5px;;">V</div>
<div class="a" style="left:703px;top:530px;width:15px;height:14px;background:linear-gradient(135deg,#f0f0f0,#c8c8c8);border:1px solid #666;box-shadow:inset -2px -2px 0 #888"></div>
<div class="t" style="right:307.1px;top:530.9px;font-size:12.5px;font-weight:bold;;transform:scaleX(0.8846);transform-origin:right center;">Piston disp</div>
<div class="a" style="left:729px;top:530px;width:72px;height:18px;background:#c9c9c9;border:1px solid #7a7a7a;border-right-color:#f0f0f0;border-bottom-color:#f0f0f0;box-shadow:inset 1px 1px 0 #9c9c9c;overflow:hidden;"><div class="t" style="left:2.5px;top:2.8px;font-size:12px;transform:scaleX(1.0258);transform-origin:left center;">0.7520</div></div>
<div class="t" style="left:806px;top:532.9px;font-size:12.5px;;">V</div>
<div class="a" style="left:824px;top:530px;width:56px;height:18px;background:#c9c9c9;border:1px solid #7a7a7a;border-right-color:#f0f0f0;border-bottom-color:#f0f0f0;box-shadow:inset 1px 1px 0 #9c9c9c;overflow:hidden;"><div class="t" style="left:2.5px;top:2.8px;font-size:12px;transform:scaleX(1.0257);transform-origin:left center;">0.752046</div></div>
<svg class="a" style="left:702px;top:552px" width="17" height="16" viewBox="0 0 17 16"><path d="M1 5L5 1H16V12L12 16H1Z" fill="#d8d8d8" stroke="#666" stroke-width="0.8"/><path d="M12 5H1M12 5V16M12 5L16 1" fill="none" stroke="#666" stroke-width="0.8"/><path d="M12 5L16 1V12L12 16Z" fill="#555"/></svg>
<div class="t" style="right:307.1px;top:552.2px;font-size:12.5px;font-weight:bold;;transform:scaleX(0.9420);transform-origin:right center;">1/2 Piston disp</div>
<div class="a" style="left:729px;top:552px;width:72px;height:18px;background:#c9c9c9;border:1px solid #7a7a7a;border-right-color:#f0f0f0;border-bottom-color:#f0f0f0;box-shadow:inset 1px 1px 0 #9c9c9c;overflow:hidden;"><div class="t" style="left:2.5px;top:2.8px;font-size:12px;transform:scaleX(1.0258);transform-origin:left center;">0.0000</div></div>
<div class="t" style="left:806px;top:554.2px;font-size:12.5px;;">V</div>
<svg class="a" style="left:702px;top:574px" width="17" height="16" viewBox="0 0 17 16"><path d="M1 5L5 1H16V12L12 16H1Z" fill="#d8d8d8" stroke="#666" stroke-width="0.8"/><path d="M12 5H1M12 5V16M12 5L16 1" fill="none" stroke="#666" stroke-width="0.8"/><path d="M12 5L16 1V12L12 16Z" fill="#555"/></svg>
<svg class="a" style="left:702px;top:596px" width="17" height="16" viewBox="0 0 17 16"><path d="M1 5L5 1H16V12L12 16H1Z" fill="#d8d8d8" stroke="#666" stroke-width="0.8"/><path d="M12 5H1M12 5V16M12 5L16 1" fill="none" stroke="#666" stroke-width="0.8"/><path d="M12 5L16 1V12L12 16Z" fill="#555"/></svg>
<div class="t" style="right:307.1px;top:598.3px;font-size:12.5px;font-weight:bold;;transform:scaleX(0.9545);transform-origin:right center;">6 v</div>
<div class="a" style="left:729px;top:598px;width:72px;height:18px;background:#c9c9c9;border:1px solid #7a7a7a;border-right-color:#f0f0f0;border-bottom-color:#f0f0f0;box-shadow:inset 1px 1px 0 #9c9c9c;overflow:hidden;"><div class="t" style="left:2.5px;top:2.8px;font-size:12px;transform:scaleX(1.0258);transform-origin:left center;">0.0000</div></div>
<div class="t" style="left:806px;top:600.3px;font-size:12.5px;;">V</div>
<div class="a" style="left:703px;top:619px;width:15px;height:14px;background:linear-gradient(135deg,#f0f0f0,#c8c8c8);border:1px solid #666;box-shadow:inset -2px -2px 0 #888"></div>
<div class="t" style="right:307.1px;top:620.3px;font-size:12.5px;font-weight:bold;;transform:scaleX(0.8877);transform-origin:right center;">Heise gage</div>
<div class="a" style="left:729px;top:620px;width:72px;height:18px;background:#c9c9c9;border:1px solid #7a7a7a;border-right-color:#f0f0f0;border-bottom-color:#f0f0f0;box-shadow:inset 1px 1px 0 #9c9c9c;overflow:hidden;"><div class="t" style="left:2.5px;top:2.8px;font-size:12px;transform:scaleX(1.0257);transform-origin:left center;">2.401636</div></div>
<div class="t" style="left:806px;top:622.3px;font-size:12.5px;;">V</div>
<div class="a" style="left:983px;top:78px;width:6px;height:833px;background:linear-gradient(90deg,#f0f0f0,#fff)"></div>
<div class="a" style="left:984px;top:88px;width:5px;height:328px;border-radius:5px 0 0 5px;background:linear-gradient(90deg,#2b5fc8,#74a8f0 50%,#b8dcfc);border:1px solid #3c5ca0;border-right:none"></div>
<div class="t" style="left:547px;top:564.6px;font-size:11px;font-family:'Liberation Mono',monospace;font-weight:bold;color:#fff;">rnal</div>
<div class="t" style="left:547px;top:619.6px;font-size:11px;font-family:'Liberation Mono',monospace;font-weight:bold;color:#fff;">uge</div>
<div class="a" style="left:538px;top:588px;width:21px;height:20px;border-radius:50%;background:radial-gradient(circle,#3a7a3a 0 30%,#ccc 35% 75%,#333 80%);box-shadow:3px 4px 5px rgba(0,0,0,.3)"></div>
<svg class="a" style="left:965px;top:596px" width="14" height="20" viewBox="0 0 14 20"><path d="M1 1V15L4.5 11.5L7.5 18L10 17L7 10.5H12Z" fill="#000" stroke="#fff" stroke-width="1"/></svg>
<div class="a" style="left:6px;top:331px;width:541px;height:577px;background:#b4b4b4;box-shadow:3px 4px 8px rgba(0,0,0,.35)"></div>
<div class="tb" style="left:6px;top:331px;width:541px;height:22px;border-radius:5px 5px 0 0"></div>
<div class="tl" style="left:14.5px;top:335.1px;width:13px;height:13px;"></div>
<div class="tl" style="left:35.5px;top:335.1px;width:13px;height:13px;"></div>
<div class="tl" style="left:56.5px;top:335.1px;width:13px;height:13px;"></div>
<svg class="a" style="left:149px;top:334px" width="13" height="15" viewBox="0 0 13 15"><path d="M1 1H9L12 4V14H1Z" fill="#f4f4f4" stroke="#999"/><rect x="3" y="6" width="7" height="5" fill="#7a7"/></svg>
<div class="t" style="left:168.5px;top:335.0px;font-size:14px;color:#333;transform:scaleX(1.0203);transform-origin:left center;">Motor driver 10 to 1 v8.vi Front Panel</div>
<div class="tbar" style="left:6px;top:353px;width:541px;height:35px;"></div>
<svg class="a" style="left:61px;top:364px" width="13" height="13" viewBox="0 0 13 13"><path d="M1.5 4.5H6.5V1L12 6.5L6.5 12V8.5H1.5Z" fill="#fff" stroke="#000" stroke-width="1.6"/><path d="M4 6.5H9" stroke="#000" stroke-width="1.4"/></svg>
<div class="a" style="left:125px;top:360px;width:22px;height:21px;background:#f3f3f3;border:1px solid #8a8a8a"></div>
<div class="a" style="left:131px;top:365px;width:4px;height:10px;background:#222"></div>
<div class="a" style="left:137px;top:365px;width:4px;height:10px;background:#222"></div>
<div class="a" style="left:488px;top:360px;width:22px;height:21px;background:#f0f0f0;border:1px solid #999"></div>
<svg class="a" style="left:488px;top:360px" width="21" height="20" viewBox="0 0 21 20"><path d="M7 7.3Q7 3.8 10.5 3.8Q14 3.8 14 7Q14 9.4 10.5 11.2V13.2" fill="none" stroke="#000" stroke-width="4.4" stroke-linecap="round" stroke-linejoin="round"/><circle cx="10.5" cy="16.3" r="2.1" fill="#000"/><path d="M7 7.3Q7 3.8 10.5 3.8Q14 3.8 14 7Q14 9.4 10.5 11.2V13.2" fill="none" stroke="#fff44a" stroke-width="2.2" stroke-linecap="round" stroke-linejoin="round"/><circle cx="10.5" cy="16.3" r="1" fill="#fff44a"/></svg>
<div class="a" style="left:513px;top:354px;width:34px;height:34px;background:#fff;border:2px solid #000"></div>
<div class="a" style="left:520px;top:358px;width:17px;height:8px;background:#fff;border:1.5px solid #000"></div>
<div class="a" style="left:537px;top:360px;width:4px;height:4px;background:#000"></div>
<div class="t" style="left:517.6px;top:365.9px;font-size:11.5px;;transform:scaleX(0.8944);transform-origin:left center;">motor</div>
<div class="t" style="left:520.3px;top:374.8px;font-size:11.5px;;transform:scaleX(0.8575);transform-origin:left center;">10:1</div>
<div class="a" style="left:90px;top:391px;width:32px;height:14px;background:#c4c4c4;border:1px solid #7a7a7a;border-top-color:#e4e4e4;border-left-color:#e4e4e4;clip-path:inset(-6px 0 -6px 0);"><div class="t" style="left:2px;top:0.4px;font-size:12.5px;transform:scaleX(0.8855);transform-origin:left center;">Mode</div></div>
<div class="t" style="left:251.1px;top:389.8px;font-size:12.5px;font-weight:bold;color:#f00;transform:scaleX(0.9842);transform-origin:left center;">^SEE NOTE</div>
<div class="a" style="left:87px;top:407px;width:205px;height:67px;background:#fff;border:1px solid #000"></div>
<div class="a" style="left:88px;top:442px;width:187px;height:16px;background:#3b73d6"></div>
<div class="t" style="left:94.5px;top:410.5px;font-size:13.5px;;transform:scaleX(1.0495);transform-origin:left center;">Withdraw piston</div>
<div class="t" style="left:94.5px;top:426.8px;font-size:13.5px;;transform:scaleX(1.0478);transform-origin:left center;">Constant displacement rate</div>
<div class="t" style="left:94.5px;top:444.3px;font-size:13.5px;;transform:scaleX(1.0467);transform-origin:left center;">Constant load</div>
<div class="t" style="left:94.5px;top:460.7px;font-size:13.5px;;transform:scaleX(1.0365);transform-origin:left center;">Load relaxation</div>
<div class="a" style="left:275px;top:408px;width:16px;height:65px;background:linear-gradient(90deg,#e4e4e4,#fafafa);border-left:1px solid #ccc"></div>
<div class="a" style="left:277px;top:413px;width:12px;height:22px;border-radius:6px;background:linear-gradient(90deg,#2f6ad8,#9cc8f8 50%,#2f6ad8);border:1px solid #3a5fa8"></div>
<div class="a" style="left:279px;top:444px;width:0;height:0;border-left:4px solid transparent;border-right:4px solid transparent;border-bottom:7px solid #555"></div>
<div class="a" style="left:279px;top:460px;width:0;height:0;border-left:4px solid transparent;border-right:4px solid transparent;border-top:7px solid #555"></div>
<div class="a" style="left:328px;top:393px;width:143px;height:18px;background:#c0c0c0;border:1px solid #7a7a7a;border-top-color:#e8e8e8;border-left-color:#e8e8e8"></div>
<svg class="a" style="left:329px;top:394px" width="9" height="16" viewBox="0 0 10 16" preserveAspectRatio="none"><rect width="10" height="16" fill="#bdbdbd"/><path d="M1.5 1.5H4.5M3 1.5V7M1.5 7H4.5" stroke="#000" stroke-width="1"/><path d="M0.5 15L9 1" stroke="#000" stroke-width="1"/><ellipse cx="7" cy="11.5" rx="1.8" ry="3" fill="none" stroke="#000" stroke-width="1"/></svg>
<div class="a" style="left:338px;top:394px;width:115px;height:16px;background:#bcbcbc;border-left:1px solid #888"></div>
<div class="t" style="left:341.3px;top:396.3px;font-size:12.5px;;transform:scaleX(0.8351);transform-origin:left center;">ASRL1::INSTR</div>
<div class="a" style="left:453px;top:394px;width:17px;height:16px;background:#c4c4c4;border:2px solid #222;border-left-width:1px"></div>
<div class="a" style="left:456px;top:399px;width:0;height:0;border-left:5px solid transparent;border-right:5px solid transparent;border-top:7px solid #000"></div>
<div class="a" style="left:304px;top:423px;width:71px;height:14px;background:#c4c4c4;border:1px solid #7a7a7a;border-top-color:#e4e4e4;border-left-color:#e4e4e4;clip-path:inset(-6px 0 -6px 0);"><div class="t" style="left:2px;top:0.0px;font-size:12.5px;transform:scaleX(0.9883);transform-origin:left center;">Active string</div></div>
<div class="a" style="left:388px;top:420px;width:60px;height:15px;background:#c4c4c4;border:1px solid #7a7a7a;border-top-color:#e4e4e4;border-left-color:#e4e4e4;clip-path:inset(-6px 0 -6px 0);"><div class="t" style="left:2px;top:1.2px;font-size:12.5px;transform:scaleX(0.9504);transform-origin:left center;">Sent string</div></div>
<div class="a" style="left:460px;top:422px;width:63px;height:14px;background:#c4c4c4;border:1px solid #7a7a7a;border-top-color:#e4e4e4;border-left-color:#e4e4e4;clip-path:inset(-6px 0 -6px 0);"><div class="t" style="left:2px;top:0.2px;font-size:12.5px;transform:scaleX(0.9164);transform-origin:left center;">Read String</div></div>
<div class="a" style="left:305px;top:439px;width:62px;height:143px;background:#cacaca;border:1px solid #888;border-right-color:#eee;border-bottom-color:#eee;box-shadow:inset 1px 1px 0 #aaa"></div>
<div class="a" style="left:306px;top:440px;width:4px;height:141px;background:linear-gradient(90deg,#ddd,#f8f8f8);border-right:1px solid #999"></div>
<div class="t" style="left:312px;top:442.3px;font-size:12.5px;;">S</div>
<div class="a" style="left:380px;top:439px;width:61px;height:143px;background:#cacaca;border:1px solid #888;border-right-color:#eee;border-bottom-color:#eee;box-shadow:inset 1px 1px 0 #aaa"></div>
<div class="a" style="left:381px;top:440px;width:4px;height:141px;background:linear-gradient(90deg,#ddd,#f8f8f8);border-right:1px solid #999"></div>
<div class="t" style="left:387px;top:442.3px;font-size:12.5px;;">S\s</div>
<div class="a" style="left:453px;top:441px;width:62px;height:144px;background:#cacaca;border:1px solid #888;border-right-color:#eee;border-bottom-color:#eee;box-shadow:inset 1px 1px 0 #aaa"></div>
<div class="a" style="left:454px;top:442px;width:4px;height:142px;background:linear-gradient(90deg,#ddd,#f8f8f8);border-right:1px solid #999"></div>
<div class="a" style="left:301px;top:590px;width:98px;height:17px;background:#cacaca;border:1px solid #888;border-right-color:#eee;border-bottom-color:#eee;box-shadow:inset 1px 1px 0 #aaa"></div>
<div class="a" style="left:302px;top:591px;width:4px;height:15px;background:linear-gradient(90deg,#ddd,#f8f8f8);border-right:1px solid #999"></div>
<div class="t" style="left:404.2px;top:594.3px;font-size:12.5px;;transform:scaleX(0.9625);transform-origin:left center;">current selected displac</div>
<div class="a" style="left:16px;top:478px;width:276px;height:131px;border:1px solid #8a8a8a;border-top-color:#e2e2e2;border-left-color:#e2e2e2"></div>
<div class="a" style="left:20px;top:482px;width:268px;height:123px;border:1px solid #e2e2e2;border-top-color:#8a8a8a;border-left-color:#8a8a8a"></div>
<div class="a" style="left:39px;top:487px;width:34px;height:15px;background:#c4c4c4;border:1px solid #7a7a7a;border-top-color:#e4e4e4;border-left-color:#e4e4e4;clip-path:inset(-6px 0 -6px 0);"><div class="t" style="left:2px;top:0.4px;font-size:12.5px;transform:scaleX(0.9582);transform-origin:left center;">set pt</div></div>
<div class="a" style="left:74px;top:485px;width:7px;height:17px;background:#bdbdbd;border:1px solid #8a8a8a"><div class="a" style="left:0;top:1px;width:0;height:0;border-left:2.5px solid transparent;border-right:2.5px solid transparent;border-bottom:5px solid #000"></div><div class="a" style="left:0;bottom:1px;width:0;height:0;border-left:2.5px solid transparent;border-right:2.5px solid transparent;border-top:5px solid #000"></div></div>
<div class="a" style="left:82px;top:485px;width:66px;height:17px;background:#c2c2c2;border:1px solid #6f6f6f;border-right-color:#ececec;border-bottom-color:#ececec;box-shadow:inset 1px 1px 0 #a0a0a0,1px 1px 0 #8a8a8a;overflow:hidden;"><div class="t" style="left:2.5px;top:1.8px;font-size:12px;transform:scaleX(1.0257);transform-origin:left center;">0.023000</div></div>
<div class="a" style="left:22px;top:507px;width:62px;height:14px;background:#c4c4c4;border:1px solid #7a7a7a;border-top-color:#e4e4e4;border-left-color:#e4e4e4;clip-path:inset(-6px 0 -6px 0);"><div class="t" style="left:1px;top:-0.1px;font-size:12.5px;transform:scaleX(0.9510);transform-origin:left center;">gauge zero</div></div>
<div class="a" style="left:85px;top:504px;width:7px;height:18px;background:#bdbdbd;border:1px solid #8a8a8a"><div class="a" style="left:0;top:1px;width:0;height:0;border-left:2.5px solid transparent;border-right:2.5px solid transparent;border-bottom:5px solid #000"></div><div class="a" style="left:0;bottom:1px;width:0;height:0;border-left:2.5px solid transparent;border-right:2.5px solid transparent;border-top:5px solid #000"></div></div>
<div class="a" style="left:92px;top:504px;width:56px;height:18px;background:#c2c2c2;border:1px solid #6f6f6f;border-right-color:#ececec;border-bottom-color:#ececec;box-shadow:inset 1px 1px 0 #a0a0a0,1px 1px 0 #8a8a8a;overflow:hidden;"><div class="t" style="left:2.5px;top:2.8px;font-size:12px;transform:scaleX(1.0257);transform-origin:left center;">0.002594</div></div>
<div class="a" style="left:152px;top:490px;width:7px;height:17px;background:#bdbdbd;border:1px solid #8a8a8a"><div class="a" style="left:0;top:1px;width:0;height:0;border-left:2.5px solid transparent;border-right:2.5px solid transparent;border-bottom:5px solid #000"></div><div class="a" style="left:0;bottom:1px;width:0;height:0;border-left:2.5px solid transparent;border-right:2.5px solid transparent;border-top:5px solid #000"></div></div>
<div class="a" style="left:160px;top:490px;width:60px;height:17px;background:#c2c2c2;border:1px solid #6f6f6f;border-right-color:#ececec;border-bottom-color:#ececec;box-shadow:inset 1px 1px 0 #a0a0a0,1px 1px 0 #8a8a8a;overflow:hidden;"><div class="t" style="left:2.5px;top:1.8px;font-size:12px;transform:scaleX(1.0258);transform-origin:left center;">200.00</div></div>
<div class="a" style="left:223px;top:492px;width:28px;height:14px;background:#c4c4c4;border:1px solid #7a7a7a;border-top-color:#e4e4e4;border-left-color:#e4e4e4;clip-path:inset(-6px 0 -6px 0);"><div class="t" style="left:2px;top:1.4px;font-size:12.5px;transform:scaleX(0.8862);transform-origin:left center;">Prop</div></div>
<div class="a" style="left:152px;top:510px;width:7px;height:17px;background:#bdbdbd;border:1px solid #8a8a8a"><div class="a" style="left:0;top:1px;width:0;height:0;border-left:2.5px solid transparent;border-right:2.5px solid transparent;border-bottom:5px solid #000"></div><div class="a" style="left:0;bottom:1px;width:0;height:0;border-left:2.5px solid transparent;border-right:2.5px solid transparent;border-top:5px solid #000"></div></div>
<div class="a" style="left:160px;top:510px;width:60px;height:17px;background:#c2c2c2;border:1px solid #6f6f6f;border-right-color:#ececec;border-bottom-color:#ececec;box-shadow:inset 1px 1px 0 #a0a0a0,1px 1px 0 #8a8a8a;overflow:hidden;"><div class="t" style="left:2.5px;top:1.8px;font-size:12px;transform:scaleX(1.0257);transform-origin:left center;">0.000010</div></div>
<div class="a" style="left:223px;top:512px;width:21px;height:14px;background:#c4c4c4;border:1px solid #7a7a7a;border-top-color:#e4e4e4;border-left-color:#e4e4e4;clip-path:inset(-6px 0 -6px 0);"><div class="t" style="left:2px;top:1.4px;font-size:12.5px;transform:scaleX(0.9708);transform-origin:left center;">Int</div></div>
<div class="a" style="left:152px;top:528px;width:7px;height:17px;background:#bdbdbd;border:1px solid #8a8a8a"><div class="a" style="left:0;top:1px;width:0;height:0;border-left:2.5px solid transparent;border-right:2.5px solid transparent;border-bottom:5px solid #000"></div><div class="a" style="left:0;bottom:1px;width:0;height:0;border-left:2.5px solid transparent;border-right:2.5px solid transparent;border-top:5px solid #000"></div></div>
<div class="a" style="left:160px;top:528px;width:60px;height:17px;background:#c2c2c2;border:1px solid #6f6f6f;border-right-color:#ececec;border-bottom-color:#ececec;box-shadow:inset 1px 1px 0 #a0a0a0,1px 1px 0 #8a8a8a;overflow:hidden;"><div class="t" style="left:2.5px;top:1.8px;font-size:12px;transform:scaleX(1.0257);transform-origin:left center;">0.400000</div></div>
<div class="a" style="left:223px;top:530px;width:65px;height:14px;background:#c4c4c4;border:1px solid #7a7a7a;border-top-color:#e4e4e4;border-left-color:#e4e4e4;clip-path:inset(-6px 0 -6px 0);"><div class="t" style="left:2px;top:1.4px;font-size:12.5px;transform:scaleX(1.0347);transform-origin:left center;">hi reset limit</div></div>
<div class="a" style="left:152px;top:548px;width:7px;height:17px;background:#bdbdbd;border:1px solid #8a8a8a"><div class="a" style="left:0;top:1px;width:0;height:0;border-left:2.5px solid transparent;border-right:2.5px solid transparent;border-bottom:5px solid #000"></div><div class="a" style="left:0;bottom:1px;width:0;height:0;border-left:2.5px solid transparent;border-right:2.5px solid transparent;border-top:5px solid #000"></div></div>
<div class="a" style="left:160px;top:548px;width:60px;height:17px;background:#c2c2c2;border:1px solid #6f6f6f;border-right-color:#ececec;border-bottom-color:#ececec;box-shadow:inset 1px 1px 0 #a0a0a0,1px 1px 0 #8a8a8a;overflow:hidden;"><div class="t" style="left:2.5px;top:1.8px;font-size:12px;transform:scaleX(1.0257);transform-origin:left center;">0.050000</div></div>
<div class="a" style="left:223px;top:550px;width:65px;height:14px;background:#c4c4c4;border:1px solid #7a7a7a;border-top-color:#e4e4e4;border-left-color:#e4e4e4;clip-path:inset(-6px 0 -6px 0);"><div class="t" style="left:2px;top:1.4px;font-size:12.5px;transform:scaleX(1.0347);transform-origin:left center;">lo reset limit</div></div>
<div class="a" style="left:289px;top:480px;width:3px;height:128px;background:#b4b4b4"></div>
<div class="a" style="left:152px;top:567px;width:7px;height:17px;background:#bdbdbd;border:1px solid #8a8a8a"><div class="a" style="left:0;top:1px;width:0;height:0;border-left:2.5px solid transparent;border-right:2.5px solid transparent;border-bottom:5px solid #000"></div><div class="a" style="left:0;bottom:1px;width:0;height:0;border-left:2.5px solid transparent;border-right:2.5px solid transparent;border-top:5px solid #000"></div></div>
<div class="a" style="left:160px;top:567px;width:48px;height:17px;background:#c2c2c2;border:1px solid #6f6f6f;border-right-color:#ececec;border-bottom-color:#ececec;box-shadow:inset 1px 1px 0 #a0a0a0,1px 1px 0 #8a8a8a;overflow:hidden;"><div class="t" style="left:2.5px;top:1.8px;font-size:12px;transform:scaleX(1.0253);transform-origin:left center;">0.50</div></div>
<div class="a" style="left:212px;top:568px;width:52px;height:15px;background:#c4c4c4;border:1px solid #7a7a7a;border-top-color:#e4e4e4;border-left-color:#e4e4e4;clip-path:inset(-6px 0 -6px 0);"><div class="t" style="left:2px;top:1.4px;font-size:12.5px;transform:scaleX(0.9933);transform-origin:left center;">total limit</div></div>
<div class="a" style="left:110px;top:585px;width:7px;height:17px;background:#bdbdbd;border:1px solid #8a8a8a"><div class="a" style="left:0;top:1px;width:0;height:0;border-left:2.5px solid transparent;border-right:2.5px solid transparent;border-bottom:5px solid #000"></div><div class="a" style="left:0;bottom:1px;width:0;height:0;border-left:2.5px solid transparent;border-right:2.5px solid transparent;border-top:5px solid #000"></div></div>
<div class="a" style="left:117px;top:585px;width:48px;height:17px;background:#c2c2c2;border:1px solid #6f6f6f;border-right-color:#ececec;border-bottom-color:#ececec;box-shadow:inset 1px 1px 0 #a0a0a0,1px 1px 0 #8a8a8a;overflow:hidden;"><div class="t" style="left:2.5px;top:1.8px;font-size:12px;transform:scaleX(1.0258);transform-origin:left center;">0.2916</div></div>
<div class="a" style="left:170px;top:588px;width:103px;height:14px;background:#c4c4c4;border:1px solid #7a7a7a;border-top-color:#e4e4e4;border-left-color:#e4e4e4;clip-path:inset(-6px 0 -6px 0);"><div class="t" style="left:2px;top:0.4px;font-size:12.5px;transform:scaleX(0.9573);transform-origin:left center;">1st pist contact (V)</div></div>
<div class="a" style="left:96px;top:611px;width:53px;height:42px;border-radius:50%;background:#d2d2fa;border:1.5px solid #000;box-shadow:inset -1px -3px 0 #9a9ab8"></div>
<div class="t" style="left:110.3px;top:624.8px;font-size:16px;font-weight:bold;color:#f00;transform:scaleX(0.9763);transform-origin:left center;">GO</div>
<div class="a" style="left:154px;top:616px;width:18px;height:18px;background:linear-gradient(135deg,#d4d4d4,#aaaaaa);border:1px solid #777;box-shadow:inset 1px 1px 0 #eee"></div>
<div class="t" style="left:178.7px;top:619.2px;font-size:12.5px;font-weight:bold;;transform:scaleX(0.9409);transform-origin:left center;">Motor running</div>
<div class="t" style="left:262.1px;top:610.0px;font-size:12.5px;;transform:scaleX(0.9693);transform-origin:left center;">internal force gauge (v)</div>
<div class="a" style="left:269px;top:625px;width:58px;height:17px;background:#c2c2c2;border:1px solid #6f6f6f;border-right-color:#ececec;border-bottom-color:#ececec;box-shadow:inset 1px 1px 0 #a0a0a0,1px 1px 0 #8a8a8a;overflow:hidden;"><div class="t" style="left:2.5px;top:1.8px;font-size:12px;transform:scaleX(1.0257);transform-origin:left center;">0.026464</div></div>
<div class="a" style="left:269px;top:645px;width:58px;height:16px;background:#c2c2c2;border:1px solid #6f6f6f;border-right-color:#ececec;border-bottom-color:#ececec;box-shadow:inset 1px 1px 0 #a0a0a0,1px 1px 0 #8a8a8a;overflow:hidden;"><div class="t" style="left:2.5px;top:1.8px;font-size:12px;transform:scaleX(1.0257);transform-origin:left center;">0.255275</div></div>
<div class="a" style="left:269px;top:663px;width:58px;height:16px;background:#c2c2c2;border:1px solid #6f6f6f;border-right-color:#ececec;border-bottom-color:#ececec;box-shadow:inset 1px 1px 0 #a0a0a0,1px 1px 0 #8a8a8a;overflow:hidden;"><div class="t" style="left:2.5px;top:1.8px;font-size:12px;transform:scaleX(1.0257);transform-origin:left center;">0.023769</div></div>
<div class="a" style="left:269px;top:681px;width:58px;height:16px;background:#c2c2c2;border:1px solid #6f6f6f;border-right-color:#ececec;border-bottom-color:#ececec;box-shadow:inset 1px 1px 0 #a0a0a0,1px 1px 0 #8a8a8a;overflow:hidden;"><div class="t" style="left:2.5px;top:1.8px;font-size:12px;transform:scaleX(1.0257);transform-origin:left center;">0.026363</div></div>
<div class="a" style="left:337px;top:629px;width:14px;height:13px;background:linear-gradient(135deg,#e0e0e0,#a8a8a8);border:1px solid #777"></div>
<div class="t" style="left:355.5px;top:630.4px;font-size:10.5px;font-weight:bold;letter-spacing:0.6px;transform:scaleX(0.9081);transform-origin:left center;">smooth</div>
<div class="a" style="left:406px;top:623px;width:41px;height:19px;background:linear-gradient(#d0d0d0,#b0b0b0);border:1px solid #888;border-top-color:#eee;border-left-color:#eee"></div>
<div class="t" style="left:416px;top:627.2px;font-size:15px;;">3</div>
<div class="a" style="left:431px;top:629px;width:0;height:0;border-left:6.5px solid transparent;border-right:6.5px solid transparent;border-top:8px solid #000"></div>
<div class="t" style="left:450.4px;top:628.3px;font-size:12px;font-weight:bold;letter-spacing:0.3px;transform:scaleX(0.9539);transform-origin:left center;"># of pts</div>
<div class="t" style="left:337.1px;top:646.8px;font-size:12.5px;;transform:scaleX(0.9890);transform-origin:left center;">current reset</div>
<div class="a" style="left:336px;top:665px;width:75px;height:15px;background:#c4c4c4;border:1px solid #7a7a7a;border-top-color:#e4e4e4;border-left-color:#e4e4e4;clip-path:inset(-6px 0 -6px 0);"><div class="t" style="left:1px;top:0.4px;font-size:12.5px;transform:scaleX(0.9938);transform-origin:left center;">current set pt</div></div>
<div class="a" style="left:336px;top:683px;width:98px;height:14px;background:#c4c4c4;border:1px solid #7a7a7a;border-top-color:#e4e4e4;border-left-color:#e4e4e4;clip-path:inset(-6px 0 -6px 0);"><div class="t" style="left:1px;top:0.6px;font-size:12.5px;transform:scaleX(0.9695);transform-origin:left center;">current command</div></div>
<div class="a" style="left:85px;top:696px;width:360px;height:90px;border:1px solid #e0e0e0;border-right-color:#7a7a7a;border-bottom-color:#7a7a7a"></div>
<div class="a" style="left:85px;top:789px;width:360px;height:90px;border:1px solid #e0e0e0;border-right-color:#7a7a7a;border-bottom-color:#7a7a7a"></div>
<div class="a" style="left:444px;top:696px;width:1px;height:183px;background:#7a7a7a"></div>
<div class="a" style="left:132px;top:704px;width:299px;height:58px;background:#000"></div>
<svg class="a" style="left:0;top:0" width="989" height="911"><polyline fill="none" stroke="#fff" stroke-width="1.3" points="133.0,757.3 135.0,758.3 137.0,759.3 139.0,758.3 141.0,758.3 143.0,757.8 145.0,758.3 147.0,757.3 149.0,757.8 151.0,758.3 153.0,757.8 155.0,758.3 157.0,758.3 159.0,758.3 161.0,759.3 163.0,759.3 165.0,758.3 167.0,758.3 169.0,758.3 171.0,757.8 173.0,759.3 175.0,758.3 177.0,757.8 179.0,758.3 181.0,758.3 183.0,757.8 185.0,758.3 187.0,757.8 189.0,757.8 191.0,759.3 193.0,758.3 195.0,758.3 197.0,758.3 199.0,757.8 201.0,758.3 203.0,757.3 205.0,759.3 207.0,758.3 209.0,757.8 211.0,758.3 213.0,757.8 215.0,757.3 217.0,757.8 219.0,758.3 221.0,758.3 223.0,757.8 225.0,757.8 227.0,758.3 229.0,757.3 231.0,758.3 233.0,757.8 235.0,758.3 237.0,757.8 239.0,758.3 241.0,757.8 243.0,758.3 245.0,759.3 247.0,757.8 249.0,759.3 251.0,757.3 253.0,759.3 255.0,757.8 257.0,759.3 259.0,757.3 261.0,757.3 263.0,758.3 265.0,758.3 267.0,758.3 269.0,758.3 271.0,757.8 273.0,757.3 275.0,757.8 277.0,759.3 279.0,757.3 281.0,759.3 283.0,757.3 285.0,757.8 287.0,758.3 289.0,758.3 291.0,757.8 293.0,759.3 295.0,758.3 297.0,757.3 299.0,758.3 301.0,759.3 303.0,759.3 305.0,758.3 307.0,758.3 309.0,757.8 311.0,757.8 313.0,757.3 315.0,757.3 317.0,757.3 319.0,757.8 321.0,759.3 323.0,757.8 325.0,759.3 327.0,758.3 329.0,758.3 331.0,757.3 333.0,759.3 335.0,758.3 337.0,758.3 339.0,757.3 341.0,757.8 343.0,759.3 345.0,757.3 347.0,759.3 349.0,757.3 351.0,758.3 353.0,759.3 355.0,757.3 357.0,758.3 359.0,757.8 361.0,758.3 363.0,759.3 365.0,758.3 367.0,758.3 369.0,757.3 371.0,758.3 373.0,758.3 375.0,759.3 377.0,759.3 379.0,759.3 381.0,758.3 383.0,758.3 385.0,759.3 387.0,759.3 389.0,757.8 391.0,757.3 393.0,758.3 395.0,759.3 397.0,757.8 399.0,757.3 401.0,759.3 403.0,757.3 405.0,759.3 407.0,758.3 409.0,758.3 411.0,758.3 413.0,758.0 413.5,709.0 414.5,711.0 415.0,725.0 416.0,729.4 417.5,729.7 419.0,729.7 420.5,730.9 422.0,731.4 423.5,729.8 425.0,728.5 426.5,730.6 428.0,730.3 429.5,731.3"/></svg>
<div class="a" style="left:125px;top:704px;width:6px;height:1px;background:#000"></div>
<div class="t" style="right:864.7px;top:700.3px;font-size:12.5px;;transform:scaleX(0.9448);transform-origin:right center;">0.50</div>
<div class="a" style="left:125px;top:733px;width:6px;height:1px;background:#000"></div>
<div class="t" style="right:864.7px;top:728.8px;font-size:12.5px;;transform:scaleX(0.9448);transform-origin:right center;">0.25</div>
<div class="a" style="left:125px;top:761px;width:6px;height:1px;background:#000"></div>
<div class="t" style="right:864.7px;top:757.3px;font-size:12.5px;;transform:scaleX(0.9448);transform-origin:right center;">0.00</div>
<div class="a" style="left:132px;top:762px;width:1px;height:6px;background:#000"></div>
<div class="a" style="left:430px;top:762px;width:1px;height:6px;background:#000"></div>
<div class="t" style="left:120.5px;top:769.8px;font-size:12.5px;;">3164</div>
<div class="t" style="right:544.5px;top:769.8px;font-size:12.5px;;">8163</div>
<div class="a" style="left:135px;top:799px;width:296px;height:57px;background:#000"></div>
<svg class="a" style="left:0;top:0" width="989" height="911"><polyline fill="none" stroke="#fff" stroke-width="1.35" points="135.5,815.6 136.1,822.0 136.6,824.5 137.2,818.4 137.7,815.1 138.3,820.2 138.8,822.4 139.4,824.8 139.9,815.6 140.5,815.3 141.0,823.2 141.6,822.3 142.1,826.5 142.7,824.3 143.2,820.0 143.8,819.3 144.3,830.4 144.9,819.2 145.4,817.2 146.0,815.8 146.5,820.7 147.1,820.9 147.6,819.0 148.2,820.1 148.7,821.4 149.3,823.1 149.8,824.7 150.4,821.1 150.9,813.1 151.5,823.1 152.0,814.6 152.6,819.6 153.1,814.4 153.7,820.3 154.2,817.1 154.8,821.1 155.3,830.2 155.9,820.0 156.4,823.6 157.0,814.9 157.5,819.0 158.1,822.8 158.6,819.8 159.2,821.7 159.7,820.6 160.3,816.1 160.8,822.4 161.4,816.9 161.9,827.6 162.5,818.1 163.0,822.9 163.6,820.1 164.1,823.9 164.7,817.7 165.2,824.1 165.8,819.6 166.3,825.1 166.9,822.6 167.4,820.6 168.0,816.9 168.5,823.1 169.1,821.9 169.6,826.6 170.2,818.5 170.7,822.2 171.3,822.0 171.8,821.1 172.4,820.8 172.9,820.7 173.5,817.6 174.0,815.9 174.6,818.4 175.1,822.3 175.7,826.0 176.2,823.9 176.8,824.1 177.3,823.0 177.9,822.7 178.4,820.6 179.0,823.0 179.5,827.0 180.1,818.6 180.6,817.1 181.2,827.7 181.7,820.8 182.3,823.7 182.8,823.3 183.4,815.3 183.9,829.6 184.5,826.9 185.0,820.5 185.6,822.8 186.1,820.3 186.7,816.3 187.2,819.3 187.8,821.3 188.3,824.2 188.9,822.6 189.4,820.0 190.0,825.2 190.5,816.7 191.1,822.9 191.6,824.2 192.2,818.6 192.7,812.6 193.3,816.1 193.8,820.7 194.4,821.8 194.9,825.9 195.5,815.7 196.0,819.7 196.6,822.3 197.1,819.0 197.7,810.2 198.2,822.9 198.8,828.9 199.3,823.6 199.9,816.0 200.4,818.0 201.0,820.5 201.5,829.6 202.1,822.1 202.6,820.0 203.2,825.8 203.7,819.2 204.3,827.0 204.8,816.8 205.4,817.7 205.9,822.4 206.5,825.2 207.0,822.1 207.6,820.7 208.1,812.2 208.7,816.7 209.2,817.1 209.8,817.4 210.3,821.8 210.9,818.1 211.4,822.6 212.0,819.8 212.5,818.1 213.1,819.9 213.6,821.2 214.2,822.9 214.7,817.5 215.3,818.5 215.8,814.0 216.4,825.8 216.9,825.2 217.5,818.7 218.0,817.5 218.6,814.4 219.1,820.0 219.7,820.2 220.2,828.1 220.8,820.3 221.3,816.2 221.9,809.5 222.4,825.0 223.0,820.1 223.5,812.9 224.1,820.0 224.6,812.9 225.2,829.3 225.7,823.8 226.3,821.6 226.8,818.6 227.4,810.7 227.9,818.7 228.5,813.0 229.0,821.6 229.6,810.7 230.1,815.6 230.7,824.1 231.2,825.8 231.8,814.5 232.3,813.0 232.9,822.7 233.4,822.6 234.0,815.2 234.5,816.4 235.1,816.4 235.6,814.4 236.2,816.4 236.7,824.1 237.3,821.9 237.8,827.3 238.4,818.8 238.9,818.6 239.5,815.2 240.0,818.6 240.6,813.8 241.1,812.0 241.7,821.8 242.2,824.8 242.8,822.4 243.3,824.4 243.9,820.0 244.4,816.1 245.0,819.4 245.5,817.5 246.1,814.6 246.6,812.2 247.2,813.1 247.7,819.0 248.3,819.6 248.8,817.1 249.4,824.7 249.9,819.7 250.5,821.3 251.0,823.8 251.6,815.6 252.1,811.0 252.7,821.9 253.2,816.1 253.8,824.1 254.3,820.2 254.9,822.9 255.4,821.9 256.0,810.5 256.5,821.7 257.1,816.2 257.6,815.8 258.2,837.0 258.7,837.0 259.3,822.4 259.8,822.9 260.4,812.2 260.9,816.4 261.5,809.3 262.0,818.4 262.6,821.2 263.1,815.7 263.7,819.7 264.2,819.7 264.8,822.8 265.3,815.5 265.9,815.4 266.4,815.7 267.0,825.7 267.5,823.1 268.1,818.2 268.6,819.6 269.2,819.1 269.7,819.5 270.3,817.8 270.8,817.3 271.4,813.6 271.9,816.1 272.5,825.2 273.0,820.8 273.6,818.9 274.1,817.8 274.7,818.9 275.2,820.0 275.8,816.0 276.3,819.4 276.9,819.5 277.4,815.6 278.0,815.4 278.5,814.6 279.1,814.3 279.6,822.1 280.2,809.1 280.7,817.5 281.3,816.1 281.8,816.0 282.4,818.9 282.9,823.0 283.5,818.8 284.0,817.9 284.6,816.0 285.1,818.0 285.7,822.1 286.2,816.9 286.8,813.9 287.3,813.4 287.9,814.0 288.4,812.9 289.0,822.8 289.5,819.8 290.1,817.5 290.6,824.2 291.2,815.8 291.7,821.4 292.3,821.6 292.8,812.2 293.4,812.1 293.9,814.6 294.5,822.0 295.0,823.5 295.6,813.4 296.1,822.5 296.7,816.8 297.2,816.7 297.8,816.1 298.3,817.0 298.9,811.0 299.4,814.3 300.0,813.3 300.5,820.2 301.1,826.6 301.6,828.2 302.2,816.9 302.7,811.3 303.3,816.6 303.8,814.5 304.4,826.1 304.9,820.5 305.5,815.3 306.0,821.9 306.6,820.3 307.1,811.7 307.7,816.0 308.2,817.2 308.8,818.2 309.3,818.7 309.9,816.8 310.4,818.9 311.0,815.8 311.5,814.5 312.1,824.2 312.6,819.5 313.2,819.8 313.7,811.7 314.3,817.4 314.8,821.3 315.4,812.9 315.9,822.4 316.5,816.5 317.0,819.7 317.6,817.5 318.1,818.9 318.7,822.8 319.2,816.4 319.8,824.3 320.3,814.9 320.9,814.3 321.4,820.8 322.0,813.7 322.5,816.5 323.1,821.6 323.6,822.8 324.2,810.8 324.7,820.0 325.3,825.5 325.8,822.7 326.4,817.0 326.9,815.5 327.5,816.7 328.0,813.3 328.6,816.8 329.1,817.1 329.7,817.3 330.2,822.6 330.8,816.9 331.3,812.0 331.9,822.0 332.4,813.5 333.0,816.0 333.5,817.3 334.1,816.4 334.6,813.8 335.2,816.8 335.7,826.5 336.3,815.4 336.8,817.2 337.4,822.3 337.9,820.7 338.5,820.8 339.0,821.2 339.6,809.9 340.1,814.3 340.7,818.2 341.2,819.7 341.8,822.9 342.3,819.6 342.9,816.7 343.4,817.8 344.0,816.8 344.5,818.7 345.1,820.4 345.6,816.3 346.2,814.4 346.7,814.2 347.3,822.0 347.8,822.7 348.4,821.6 348.9,821.0 349.5,820.9 350.0,817.6 350.6,820.2 351.1,813.4 351.7,816.8 352.2,814.6 352.8,820.5 353.3,815.2 353.9,817.1 354.4,819.1 355.0,822.9 355.5,814.4 356.1,813.8 356.6,820.8 357.2,813.1 357.7,819.3 358.3,815.2 358.8,817.1 359.4,810.2 359.9,820.3 360.5,815.5 361.0,813.9 361.6,825.7 362.1,820.3 362.7,827.4 363.2,819.0 363.8,816.0 364.3,817.8 364.9,823.8 365.4,817.3 366.0,819.2 366.5,819.4 367.1,813.7 367.6,817.9 368.2,815.3 368.7,812.4 369.3,820.8 369.8,820.0 370.4,817.6 370.9,813.7 371.5,809.3 372.0,817.2 372.6,813.7 373.1,804.3 373.7,813.9 374.2,805.1 374.8,814.1 375.3,815.1 375.9,816.4 376.4,815.5 377.0,815.3 377.5,807.4 378.1,811.9 378.6,811.1 379.2,812.8 379.7,815.8 380.3,817.9 380.8,824.0 381.4,804.2 381.9,816.6 382.5,813.0 383.0,824.1 383.6,819.7 384.1,804.2 384.7,816.5 385.2,811.0 385.8,820.1 386.3,807.8 386.9,813.5 387.4,813.3 388.0,813.5 388.5,810.6 389.1,804.1 389.6,816.8 390.2,820.0 390.7,813.6 391.3,807.9 391.8,815.2 392.4,817.4 392.9,813.0 393.5,803.0 394.0,803.0 394.6,803.0 395.1,810.6 395.7,804.0 396.2,809.8 396.8,809.5 397.3,808.2 397.9,809.8 398.4,823.9 399.0,812.8 399.5,813.2 400.1,823.9 400.6,813.5 401.2,803.9 401.7,816.3 402.3,813.1 402.8,823.4 403.4,811.9 403.9,814.5 404.5,810.4 405.0,817.2 405.6,812.8 406.1,816.6 406.7,815.3 407.2,814.4 407.8,820.6 408.3,820.5 408.9,817.0 409.4,813.2 410.0,812.5 410.5,817.9 411.1,826.3 411.6,814.9 412.2,813.6 412.7,845.0 413.3,845.0 413.8,849.0 414.4,849.0 414.9,838.0 415.5,838.0 416.0,814.7 416.6,810.2 417.1,817.5 417.7,816.6 418.2,811.8 418.8,812.3 419.3,816.5 419.9,820.7 420.4,819.1 421.0,817.5 421.5,815.3 422.1,817.9 422.6,816.6 423.2,825.3 423.7,812.1 424.3,815.1 424.8,821.7 425.4,815.5 425.9,822.3 426.5,816.4 427.0,817.1 427.6,815.1 428.1,811.0 428.7,812.6 429.2,825.4 429.8,819.1 430.3,818.9 430.9,820.3"/></svg>
<div class="a" style="left:128px;top:799px;width:6px;height:1px;background:#000"></div>
<div class="t" style="right:861.1px;top:795.3px;font-size:12.5px;;transform:scaleX(0.9913);transform-origin:right center;">0.0270</div>
<div class="a" style="left:128px;top:827px;width:6px;height:1px;background:#000"></div>
<div class="t" style="right:861.1px;top:822.8px;font-size:12.5px;;transform:scaleX(0.9913);transform-origin:right center;">0.0260</div>
<div class="a" style="left:128px;top:855px;width:6px;height:1px;background:#000"></div>
<div class="t" style="right:861.1px;top:851.3px;font-size:12.5px;;transform:scaleX(0.9913);transform-origin:right center;">0.0250</div>
<div class="a" style="left:135px;top:856px;width:1px;height:6px;background:#000"></div>
<div class="a" style="left:430px;top:856px;width:1px;height:6px;background:#000"></div>
<div class="t" style="left:122.5px;top:864.0px;font-size:12.5px;;">3169</div>
<div class="t" style="right:544.5px;top:864.0px;font-size:12.5px;;">8168</div>
<div class="a" style="left:448px;top:704px;width:48px;height:18px;background:#c2c2c2;border:1px solid #6f6f6f;border-right-color:#ececec;border-bottom-color:#ececec;box-shadow:inset 1px 1px 0 #a0a0a0,1px 1px 0 #8a8a8a;overflow:hidden;"><div class="t" style="left:2.5px;top:1.8px;font-size:12px;transform:scaleX(1.0258);transform-origin:left center;">0.2300</div></div>
<div class="a" style="left:450px;top:796px;width:48px;height:17px;background:#c2c2c2;border:1px solid #6f6f6f;border-right-color:#ececec;border-bottom-color:#ececec;box-shadow:inset 1px 1px 0 #a0a0a0,1px 1px 0 #8a8a8a;overflow:hidden;"><div class="t" style="left:2.5px;top:2.3px;font-size:12px;transform:scaleX(1.0258);transform-origin:left center;">0.0265</div></div>
<div class="a" style="left:446px;top:747px;width:90px;height:41px;border:1px solid #e2e2e2;border-right:none;border-bottom-color:#7a7a7a"></div>
<div class="a" style="left:450px;top:750px;width:60px;height:15px;background:#bdbdbd;border:1px solid #6f6f6f;border-right-color:#eee;border-bottom-color:#eee"></div>
<div class="a" style="left:510px;top:750px;width:9px;height:15px;background:repeating-linear-gradient(90deg,#555 0 1px,#ccc 1px 3px);border:1px solid #999"></div>
<div class="a" style="left:522px;top:750px;width:10px;height:15px;background:#c8c8c8;border:1px solid #eee;border-right-color:#888;border-bottom-color:#888"></div>
<svg class="a" style="left:523px;top:751px" width="9" height="13" viewBox="0 0 9 13"><path d="M5 1V10H9M5 10L1 13" stroke="#000" stroke-width="1.3" fill="none"/></svg>
<div class="a" style="left:450px;top:769px;width:60px;height:15px;background:#bdbdbd;border:1px solid #6f6f6f;border-right-color:#eee;border-bottom-color:#eee"></div>
<div class="a" style="left:510px;top:769px;width:9px;height:15px;background:repeating-linear-gradient(90deg,#555 0 1px,#ccc 1px 3px);border:1px solid #999"></div>
<div class="a" style="left:522px;top:769px;width:10px;height:15px;background:#c8c8c8;border:1px solid #eee;border-right-color:#888;border-bottom-color:#888"></div>
<svg class="a" style="left:523px;top:770px" width="9" height="13" viewBox="0 0 9 13"><path d="M5 1V10H9M5 10L1 13" stroke="#000" stroke-width="1.3" fill="none"/></svg>
<div class="a" style="left:446px;top:841px;width:90px;height:41px;border:1px solid #e2e2e2;border-right:none;border-bottom-color:#7a7a7a"></div>
<div class="a" style="left:450px;top:844px;width:60px;height:15px;background:#bdbdbd;border:1px solid #6f6f6f;border-right-color:#eee;border-bottom-color:#eee"></div>
<div class="a" style="left:510px;top:844px;width:9px;height:15px;background:repeating-linear-gradient(90deg,#555 0 1px,#ccc 1px 3px);border:1px solid #999"></div>
<div class="a" style="left:522px;top:844px;width:10px;height:15px;background:#c8c8c8;border:1px solid #eee;border-right-color:#888;border-bottom-color:#888"></div>
<svg class="a" style="left:523px;top:845px" width="9" height="13" viewBox="0 0 9 13"><path d="M5 1V10H9M5 10L1 13" stroke="#000" stroke-width="1.3" fill="none"/></svg>
<div class="a" style="left:450px;top:863px;width:60px;height:15px;background:#bdbdbd;border:1px solid #6f6f6f;border-right-color:#eee;border-bottom-color:#eee"></div>
<div class="a" style="left:510px;top:863px;width:9px;height:15px;background:repeating-linear-gradient(90deg,#555 0 1px,#ccc 1px 3px);border:1px solid #999"></div>
<div class="a" style="left:522px;top:863px;width:10px;height:15px;background:#c8c8c8;border:1px solid #eee;border-right-color:#888;border-bottom-color:#888"></div>
<svg class="a" style="left:523px;top:864px" width="9" height="13" viewBox="0 0 9 13"><path d="M5 1V10H9M5 10L1 13" stroke="#000" stroke-width="1.3" fill="none"/></svg>
<div class="a" style="left:532px;top:388px;width:14px;height:505px;background:linear-gradient(90deg,#e8e8e8,#fcfcfc 50%,#e0e0e0);border-left:1px solid #bbb"></div>
<div class="a" style="left:532px;top:446px;width:14px;height:415px;border-radius:7px;background:linear-gradient(90deg,#2b5fc8 0,#74a8f0 25%,#b8dcfc 50%,#74a8f0 75%,#2b5fc8 100%);border:1px solid #3c5ca0"></div>
<div class="a" style="left:535px;top:864px;width:0;height:0;border-left:4px solid transparent;border-right:4px solid transparent;border-bottom:7px solid #666"></div>
<div class="a" style="left:535px;top:880px;width:0;height:0;border-left:4px solid transparent;border-right:4px solid transparent;border-top:7px solid #666"></div>
<div class="a" style="left:532px;top:876px;width:14px;height:1px;background:#ccc"></div>
<div class="a" style="left:6px;top:893px;width:526px;height:15px;background:linear-gradient(#e8e8e8,#fcfcfc 50%,#e0e0e0);border-top:1px solid #bbb"></div>
<div class="a" style="left:11px;top:894px;width:430px;height:13px;border-radius:7px;background:linear-gradient(#2b5fc8 0,#74a8f0 25%,#b8dcfc 50%,#74a8f0 75%,#2b5fc8 100%);border:1px solid #3c5ca0"></div>
<div class="a" style="left:441px;top:894px;width:58px;height:13px;border-radius:0 7px 7px 0;background:linear-gradient(#f4f4f4,#fff 50%,#e4e4e4);border:1px solid #ccc;border-left:none"></div>
<div class="a" style="left:502px;top:897px;width:0;height:0;border-top:4px solid transparent;border-bottom:4px solid transparent;border-right:7px solid #666"></div>
<div class="a" style="left:520px;top:897px;width:0;height:0;border-top:4px solid transparent;border-bottom:4px solid transparent;border-left:7px solid #666"></div>
<div class="a" style="left:532px;top:893px;width:15px;height:15px;background:linear-gradient(135deg,#fafafa 55%,#999 56% 60%,#fafafa 61% 70%,#999 71% 75%,#fafafa 76%);border:1px solid #ccc"></div>
<div class="a" style="left:0px;top:908px;width:76px;height:3px;background:#e6e6e6"></div>
<div class="a" style="left:76px;top:908px;width:31px;height:3px;background:#6a6e78"></div>
<div class="a" style="left:107px;top:908px;width:15px;height:3px;background:#dcdcdc"></div>
<div class="a" style="left:122px;top:908px;width:425px;height:3px;background:#2b1238"></div>
<div class="a" style="left:547px;top:634px;width:442px;height:277px;background:#2b1238"></div>
<div class="a" style="left:547px;top:634px;width:442px;height:236px;background:#b4b4b4"></div>
<div class="tb" style="left:547px;top:634px;width:442px;height:22px;"></div>
<div class="a" style="left:547px;top:634px;width:40px;height:22px;overflow:hidden"><div class="tl" style="left:-7.5px;top:4.5px;width:13px;height:13px"></div><div class="tl" style="left:13.5px;top:4.5px;width:13px;height:13px"></div></div>
<svg class="a" style="left:656px;top:638px" width="12" height="15" viewBox="0 0 12 15"><path d="M1 1H8L11 4V14H1Z" fill="#f4f4f4" stroke="#999"/><rect x="3" y="6" width="6" height="5" fill="#7a7"/></svg>
<div class="t" style="left:675.2px;top:637.5px;font-size:14px;color:#333;transform:scaleX(1.0023);transform-origin:left center;">Area correction Front Panel</div>
<div class="tbar" style="left:547px;top:656px;width:442px;height:35px;"></div>
<svg class="a" style="left:565px;top:667px" width="13" height="13" viewBox="0 0 13 13"><path d="M1.5 4.5H6.5V1L12 6.5L6.5 12V8.5H1.5Z" fill="#fff" stroke="#000" stroke-width="1.6"/><path d="M4 6.5H9" stroke="#000" stroke-width="1.4"/></svg>
<div class="a" style="left:608px;top:663px;width:21px;height:21px;background:#d0d0d0;border:1px solid #8a8a8a"></div>
<svg class="a" style="left:610px;top:665px" width="17" height="17" viewBox="0 0 17 17"><path d="M5.5 1H11.5L16 5.5V11.5L11.5 16H5.5L1 11.5V5.5Z" fill="#de6b6b" stroke="#8a8a8a" stroke-width="1.2"/></svg>
<div class="a" style="left:629px;top:663px;width:22px;height:21px;background:#f6f6f6;border:1px solid #8a8a8a"></div>
<div class="a" style="left:635px;top:668px;width:4px;height:10px;background:#111"></div>
<div class="a" style="left:641px;top:668px;width:4px;height:10px;background:#111"></div>
<div class="a" style="left:934px;top:664px;width:22px;height:20px;background:#f0f0f0;border:1px solid #999"></div>
<svg class="a" style="left:934px;top:664px" width="21" height="20" viewBox="0 0 21 20"><path d="M7 7.3Q7 3.8 10.5 3.8Q14 3.8 14 7Q14 9.4 10.5 11.2V13.2" fill="none" stroke="#000" stroke-width="4.4" stroke-linecap="round" stroke-linejoin="round"/><circle cx="10.5" cy="16.3" r="2.1" fill="#000"/><path d="M7 7.3Q7 3.8 10.5 3.8Q14 3.8 14 7Q14 9.4 10.5 11.2V13.2" fill="none" stroke="#fff44a" stroke-width="2.2" stroke-linecap="round" stroke-linejoin="round"/><circle cx="10.5" cy="16.3" r="1" fill="#fff44a"/></svg>
<div class="a" style="left:959px;top:657px;width:30px;height:33px;background:#fff;border:2px solid #000;border-right:none"></div>
<div class="t" style="left:963px;top:661.4px;font-size:10px;color:#00c;font-weight:bold;transform:scaleX(0.8937);transform-origin:left center;">A corr</div>
<svg class="a" style="left:962px;top:660px" width="27" height="28" viewBox="0 0 27 28"><path d="M0.5 4V27" stroke="#22f" stroke-width="1"/><path d="M1.5 26V21H3V18H5V16H8V14.5H13V13.5H20V12.5H27" stroke="#d00" fill="none" stroke-width="1.5"/><path d="M2 27V23H4V20H7V18.5H12V17.5H27" stroke="#fd0" fill="none" stroke-width="1.2"/></svg>
<div class="a" style="left:978px;top:691px;width:11px;height:193px;background:linear-gradient(90deg,#e8e8e8,#fcfcfc)"></div>
<div class="a" style="left:979px;top:694px;width:10px;height:132px;border-radius:6px 0 0 6px;background:linear-gradient(90deg,#2b5fc8 0,#74a8f0 35%,#b8dcfc 70%);border:1px solid #3c5ca0;border-right:none"></div>
<div class="a" style="left:979px;top:838px;width:0;height:0;border-left:4px solid transparent;border-right:4px solid transparent;border-bottom:7px solid #666"></div>
<div class="a" style="left:979px;top:856px;width:0;height:0;border-left:4px solid transparent;border-right:4px solid transparent;border-top:7px solid #666"></div>
<div class="a" style="left:547px;top:870px;width:442px;height:14px;background:linear-gradient(#f0f0f0,#fff 50%,#e8e8e8);border-top:1px solid #c8c8c8"></div>
<div class="a" style="left:553px;top:715px;width:96px;height:14px;background:#c4c4c4;border:1px solid #7a7a7a;border-top-color:#e4e4e4;border-left-color:#e4e4e4;clip-path:inset(-6px 0 -6px 0);"><div class="t" style="left:2px;top:-0.0px;font-size:13px;transform:scaleX(0.9512);transform-origin:left center;">Original set point</div></div>
<div class="a" style="left:547px;top:732px;width:7px;height:17px;background:#bdbdbd;border:1px solid #8a8a8a"><div class="a" style="left:0;top:1px;width:0;height:0;border-left:2.5px solid transparent;border-right:2.5px solid transparent;border-bottom:5px solid #000"></div><div class="a" style="left:0;bottom:1px;width:0;height:0;border-left:2.5px solid transparent;border-right:2.5px solid transparent;border-top:5px solid #000"></div></div>
<div class="a" style="left:554px;top:732px;width:60px;height:17px;background:#c2c2c2;border:1px solid #6f6f6f;border-right-color:#ececec;border-bottom-color:#ececec;box-shadow:inset 1px 1px 0 #a0a0a0,1px 1px 0 #8a8a8a;overflow:hidden;"><div class="t" style="left:2.5px;top:1.8px;font-size:12px;transform:scaleX(1.0257);transform-origin:left center;">0.023000</div></div>
<div class="a" style="left:559px;top:756px;width:125px;height:15px;background:#c4c4c4;border:1px solid #7a7a7a;border-top-color:#e4e4e4;border-left-color:#e4e4e4;clip-path:inset(-6px 0 -6px 0);"><div class="t" style="left:2px;top:1.0px;font-size:13px;transform:scaleX(0.9381);transform-origin:left center;">First piston contact (V)</div></div>
<div class="a" style="left:553px;top:774px;width:7px;height:17px;background:#bdbdbd;border:1px solid #8a8a8a"><div class="a" style="left:0;top:1px;width:0;height:0;border-left:2.5px solid transparent;border-right:2.5px solid transparent;border-bottom:5px solid #000"></div><div class="a" style="left:0;bottom:1px;width:0;height:0;border-left:2.5px solid transparent;border-right:2.5px solid transparent;border-top:5px solid #000"></div></div>
<div class="a" style="left:560px;top:774px;width:48px;height:17px;background:#c2c2c2;border:1px solid #6f6f6f;border-right-color:#ececec;border-bottom-color:#ececec;box-shadow:inset 1px 1px 0 #a0a0a0,1px 1px 0 #8a8a8a;overflow:hidden;"><div class="t" style="left:2.5px;top:2.3px;font-size:12px;transform:scaleX(1.0258);transform-origin:left center;">0.2916</div></div>
<div class="a" style="left:553px;top:798px;width:79px;height:14px;background:#c4c4c4;border:1px solid #7a7a7a;border-top-color:#e4e4e4;border-left-color:#e4e4e4;clip-path:inset(-6px 0 -6px 0);"><div class="t" style="left:2px;top:-0.0px;font-size:13px;transform:scaleX(0.8930);transform-origin:left center;">Piston disp (V)</div></div>
<div class="a" style="left:553px;top:815px;width:48px;height:17px;background:#c2c2c2;border:1px solid #6f6f6f;border-right-color:#ececec;border-bottom-color:#ececec;box-shadow:inset 1px 1px 0 #a0a0a0,1px 1px 0 #8a8a8a;overflow:hidden;"><div class="t" style="left:2.5px;top:2.3px;font-size:12px;transform:scaleX(1.0258);transform-origin:left center;">0.7521</div></div>
<div class="a" style="left:562px;top:835px;width:130px;height:15px;background:#c4c4c4;border:1px solid #7a7a7a;border-top-color:#e4e4e4;border-left-color:#e4e4e4;clip-path:inset(-6px 0 -6px 0);"><div class="t" style="left:2px;top:1.0px;font-size:13px;transform:scaleX(0.9354);transform-origin:left center;">Starting sample length</div></div>
<div class="a" style="left:555px;top:852px;width:7px;height:17px;background:#bdbdbd;border:1px solid #8a8a8a"><div class="a" style="left:0;top:1px;width:0;height:0;border-left:2.5px solid transparent;border-right:2.5px solid transparent;border-bottom:5px solid #000"></div><div class="a" style="left:0;bottom:1px;width:0;height:0;border-left:2.5px solid transparent;border-right:2.5px solid transparent;border-top:5px solid #000"></div></div>
<div class="a" style="left:563px;top:852px;width:48px;height:16px;background:#c2c2c2;border:1px solid #6f6f6f;border-right-color:#ececec;border-bottom-color:#ececec;box-shadow:inset 1px 1px 0 #a0a0a0,1px 1px 0 #8a8a8a;overflow:hidden;"><div class="t" style="left:2.5px;top:1.8px;font-size:12px;transform:scaleX(1.0256);transform-origin:left center;">2.449</div></div>
<div class="a" style="left:722px;top:755px;width:41px;height:14px;background:#c4c4c4;border:1px solid #7a7a7a;border-top-color:#e4e4e4;border-left-color:#e4e4e4;clip-path:inset(-6px 0 -6px 0);"><div class="t" style="left:2px;top:0.5px;font-size:13px;transform:scaleX(0.9181);transform-origin:left center;">disp (")</div></div>
<div class="a" style="left:722px;top:773px;width:58px;height:17px;background:#c2c2c2;border:1px solid #6f6f6f;border-right-color:#ececec;border-bottom-color:#ececec;box-shadow:inset 1px 1px 0 #a0a0a0,1px 1px 0 #8a8a8a;overflow:hidden;"><div class="t" style="left:2.5px;top:1.8px;font-size:12px;transform:scaleX(1.0257);transform-origin:left center;">0.079203</div></div>
<div class="a" style="left:722px;top:793px;width:35px;height:14px;background:#c4c4c4;border:1px solid #7a7a7a;border-top-color:#e4e4e4;border-left-color:#e4e4e4;clip-path:inset(-6px 0 -6px 0);"><div class="t" style="left:2px;top:0.5px;font-size:13px;transform:scaleX(0.9749);transform-origin:left center;">strain</div></div>
<div class="a" style="left:722px;top:811px;width:58px;height:17px;background:#c2c2c2;border:1px solid #6f6f6f;border-right-color:#ececec;border-bottom-color:#ececec;box-shadow:inset 1px 1px 0 #a0a0a0,1px 1px 0 #8a8a8a;overflow:hidden;"><div class="t" style="left:2.5px;top:1.8px;font-size:12px;transform:scaleX(1.0257);transform-origin:left center;">0.032341</div></div>
<div class="a" style="left:834px;top:774px;width:96px;height:14px;background:#c4c4c4;border:1px solid #7a7a7a;border-top-color:#e4e4e4;border-left-color:#e4e4e4;clip-path:inset(-6px 0 -6px 0);"><div class="t" style="left:2px;top:0.5px;font-size:13px;transform:scaleX(0.9593);transform-origin:left center;">Current set point</div></div>
<div class="a" style="left:834px;top:791px;width:59px;height:17px;background:#c2c2c2;border:1px solid #6f6f6f;border-right-color:#ececec;border-bottom-color:#ececec;box-shadow:inset 1px 1px 0 #a0a0a0,1px 1px 0 #8a8a8a;overflow:hidden;"><div class="t" style="left:2.5px;top:2.3px;font-size:12px;transform:scaleX(1.0257);transform-origin:left center;">0.023769</div></div>
<div class="a" style="left:38.8px;top:36.8px;width:2.4px;height:2.4px;border-radius:50%;background:rgba(255,255,255,0.8)"></div>
<div class="a" style="left:41.9px;top:28.9px;width:2.2px;height:2.2px;border-radius:50%;background:rgba(255,255,255,0.45)"></div>
<div class="a" style="left:59.9px;top:28.9px;width:2.2px;height:2.2px;border-radius:50%;background:rgba(255,255,255,0.45)"></div>
<div class="a" style="left:63.9px;top:33.9px;width:2.2px;height:2.2px;border-radius:50%;background:rgba(255,255,255,0.45)"></div>
<div class="a" style="left:651.5px;top:896.5px;width:3.0px;height:3.0px;border-radius:50%;background:rgba(255,255,255,0.6)"></div>
<div class="a" style="left:611px;top:899px;width:2px;height:2px;border-radius:50%;background:rgba(255,255,255,0.35)"></div>
<div class="a" style="left:619.1px;top:902.1px;width:1.8px;height:1.8px;border-radius:50%;background:rgba(255,255,255,0.3)"></div>
<div class="a" style="left:566.2px;top:895.2px;width:1.6px;height:1.6px;border-radius:50%;background:rgba(255,255,255,0.25)"></div>
<div class="a" style="left:594.2px;top:889.2px;width:1.6px;height:1.6px;border-radius:50%;background:rgba(255,255,255,0.25)"></div>
<div class="a" style="left:678px;top:831px;width:292px;height:80px;background:#fff6a8;border:1px solid #e2c800;border-bottom:none"></div>
<div class="a" style="left:679px;top:832px;width:290px;height:12px;background:linear-gradient(#fae650,#f4dc30)"></div>
<div class="a" style="left:683px;top:835px;width:6px;height:6px;background:#fff8b0;border:1px solid #d8c000"></div>
<svg class="a" style="left:957px;top:834px" width="9" height="9" viewBox="0 0 9 9"><path d="M1 8L8 1M4 8L8 4" stroke="#c8b000"/></svg>
<div class="t" style="left:689.3px;top:846.2px;font-size:13.5px;color:#111;transform:scaleX(0.9027);transform-origin:left center;">5/8/13 0923 hrs</div>
<div class="t" style="left:780.4px;top:846.2px;font-size:13.5px;color:#111;transform:scaleX(0.9062);transform-origin:left center;">0.020854"/0.008460</div>
<div class="t" style="left:917.9px;top:846.2px;font-size:13.5px;color:#111;transform:scaleX(0.9029);transform-origin:left center;">#6160</div>
<div class="t" style="left:689.3px;top:859.9px;font-size:13.5px;color:#111;transform:scaleX(0.9027);transform-origin:left center;">5/8/13 1653 hrs</div>
<div class="t" style="left:780.4px;top:859.9px;font-size:13.5px;color:#111;transform:scaleX(0.9062);transform-origin:left center;">0.042975"/0.017140</div>
<div class="t" style="left:897.9px;top:859.9px;font-size:13.5px;color:#111;transform:scaleX(0.8242);transform-origin:left center;">(2)</div>
<div class="t" style="left:917.9px;top:859.9px;font-size:13.5px;color:#111;transform:scaleX(0.9026);transform-origin:left center;">#350</div>
<div class="t" style="left:689.3px;top:874.2px;font-size:13.5px;color:#111;transform:scaleX(0.9027);transform-origin:left center;">5/8/13 2302 hrs</div>
<div class="t" style="left:780.4px;top:874.2px;font-size:13.5px;color:#111;transform:scaleX(0.9062);transform-origin:left center;">0.054706"/0.022338</div>
<div class="t" style="left:917.9px;top:874.2px;font-size:13.5px;color:#111;transform:scaleX(0.9029);transform-origin:left center;">#2420</div>
<div class="t" style="left:689.3px;top:888.2px;font-size:13.5px;color:#111;transform:scaleX(0.9027);transform-origin:left center;">5/9/13 0629 hrs</div>
<div class="t" style="left:780.4px;top:888.2px;font-size:13.5px;color:#111;transform:scaleX(0.9062);transform-origin:left center;">0.065951"/0.026930</div>
<div class="t" style="left:917.9px;top:888.2px;font-size:13.5px;color:#111;transform:scaleX(0.9029);transform-origin:left center;">#4932</div>
<div class="t" style="left:689.3px;top:900.2px;font-size:13.5px;color:#111;transform:scaleX(0.9027);transform-origin:left center;">5/9/13 0629 hrs</div>
<div class="t" style="left:780.4px;top:900.2px;font-size:13.5px;color:#111;transform:scaleX(0.9062);transform-origin:left center;">0.079203"/0.032341</div>
<div class="t" style="left:917.9px;top:900.2px;font-size:13.5px;color:#111;transform:scaleX(0.9029);transform-origin:left center;">#8168</div>
</body></html>
